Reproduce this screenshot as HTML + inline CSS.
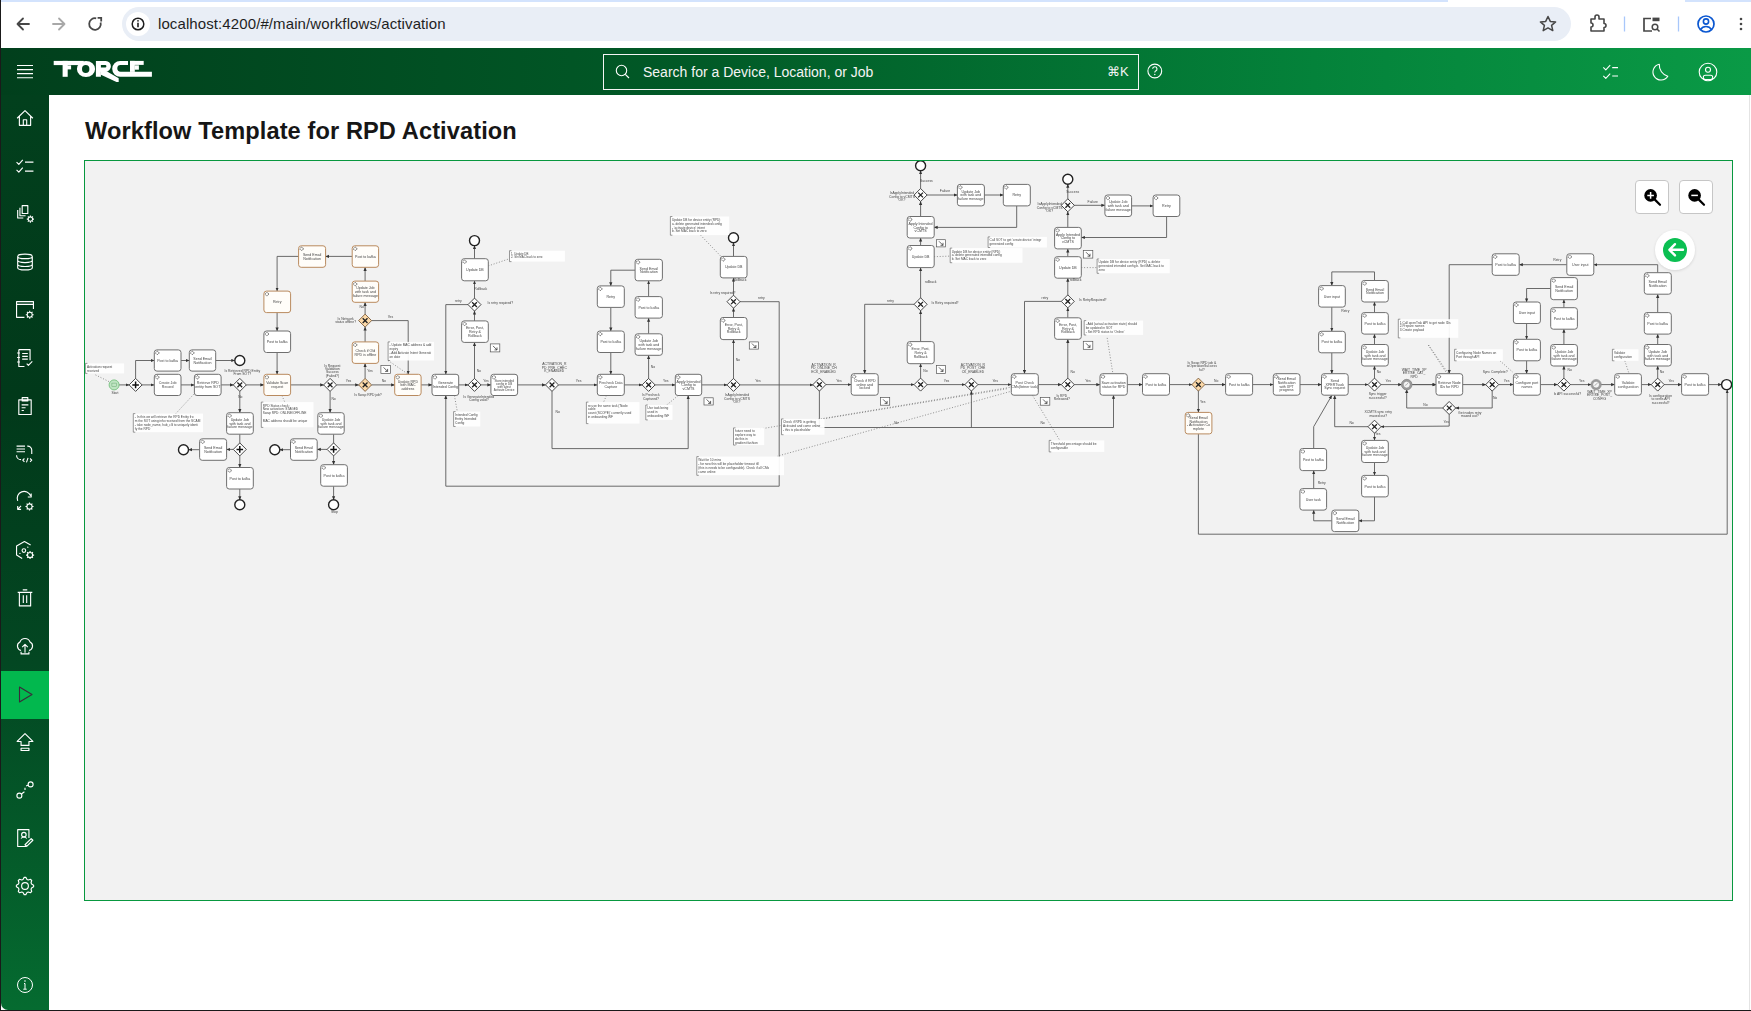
<!DOCTYPE html>
<html><head><meta charset="utf-8">
<style>
*{box-sizing:border-box;margin:0;padding:0}
html,body{width:1751px;height:1011px;overflow:hidden;background:#fff;font-family:"Liberation Sans",sans-serif}
#chrome{position:absolute;left:0;top:0;width:1751px;height:48px;background:#fff}
#tabstrip{position:absolute;left:0;top:0;width:1448px;height:1.5px;background:#d3e3fd}
#tabstrip2{position:absolute;left:1685px;top:0;width:66px;height:1.5px;background:#d3e3fd}
#url{position:absolute;left:122px;top:7px;width:1449px;height:34px;border-radius:17px;background:#e9eef6}
#urltext{position:absolute;left:158px;top:15px;font-size:15px;color:#1f1f1f;letter-spacing:0.1px}
#header{position:absolute;left:1px;top:48px;width:1750px;height:47px;background:linear-gradient(90deg,#013f1c 0%,#015a27 40%,#04823a 75%,#0a9a46 100%)}
#sidebar{position:absolute;left:1px;top:95px;width:48px;height:915px;background:linear-gradient(180deg,#02401d 0%,#01391a 33%,#034722 62%,#056b30 100%);border-bottom-left-radius:7px}
#leftedge{position:absolute;left:0;top:0;width:1px;height:1011px;background:#1a1a1a}
#bottomedge{position:absolute;left:0;top:1010px;width:1751px;height:1px;background:#1a1a1a}
#rightedge{position:absolute;left:1749px;top:95px;width:1px;height:915px;background:#e4e4e4}
#active{position:absolute;left:1px;top:671px;width:48px;height:48px;background:#02b84e}
#title{position:absolute;left:85px;top:118px;font-size:23.6px;font-weight:bold;color:#161616;letter-spacing:0.1px}
#diagram{position:absolute;left:84px;top:160px;width:1649px;height:741px;border:1px solid #08983f;background:#f2f2f2;overflow:hidden}
.icon{position:absolute}
#search{position:absolute;left:603px;top:54px;width:536px;height:36px;border:1px solid #f4f4f4}
#searchtext{position:absolute;left:643px;top:64px;font-size:14px;color:#f4f4f4}
#cmdk{position:absolute;left:1107px;top:64px;font-size:13px;color:#f4f4f4}
.zb{position:absolute;top:180px;width:34px;height:34px;border:1px solid #c6c6c6;border-radius:4px;background:#fff}
</style></head><body>
<div id="chrome"></div>
<div id="tabstrip"></div><div id="tabstrip2"></div>
<div id="url"></div>
<div style="position:absolute;left:126px;top:12px;width:24px;height:24px;border-radius:12px;background:#fff"></div>
<div id="urltext">localhost:4200/#/main/workflows/activation</div>
<!-- chrome icons -->
<svg class="icon" style="left:0;top:0" width="1751" height="48">
 <g fill="none" stroke="#474747" stroke-width="1.8" stroke-linecap="round" stroke-linejoin="round">
  <path d="M17.5 24H29M17.5 24L23 18.5M17.5 24L23 29.5"/>
 </g>
 <g fill="none" stroke="#a8a8a8" stroke-width="1.8" stroke-linecap="round" stroke-linejoin="round">
  <path d="M53 24H64.5M64.5 24L59 18.5M64.5 24L59 29.5"/>
 </g>
 <g fill="none" stroke="#474747" stroke-width="1.8">
  <path d="M100.60 22.50A5.8 5.8 0 1 1 96.21 18.33"/>
  <path d="M97.6 17.9H101.2V21.4" stroke-linejoin="miter"/>
 </g>
 <circle cx="138" cy="24" r="5.8" fill="none" stroke="#1f1f1f" stroke-width="1.5"/>
 <path d="M138 22.8V27.2" stroke="#1f1f1f" stroke-width="1.6"/>
 <circle cx="138" cy="20.8" r="0.9" fill="#1f1f1f"/>
 <path d="M1548 16.5L1550.3 21.4L1555.6 21.9L1551.6 25.4L1552.8 30.6L1548 27.9L1543.2 30.6L1544.4 25.4L1540.4 21.9L1545.7 21.4Z" fill="none" stroke="#474747" stroke-width="1.5" stroke-linejoin="round"/>
 <path d="M1591 19H1595V17A2 2 0 0 1 1599 17V19H1604V23.5A2 2 0 0 1 1604 27.5V31H1591V27A2 2 0 0 0 1591 23Z" fill="none" stroke="#474747" stroke-width="1.6" stroke-linejoin="round"/>
 <path d="M1624.5 16.5V31.5" stroke="#a8c7fa" stroke-width="1.3"/>
 <path d="M1652 31H1644V18.5H1651" fill="none" stroke="#474747" stroke-width="1.7"/>
 <rect x="1652.5" y="17.6" width="7" height="3.6" fill="#474747"/>
 <circle cx="1655" cy="27" r="2.8" fill="none" stroke="#474747" stroke-width="1.5"/>
 <path d="M1657 29L1659.5 31.5" stroke="#474747" stroke-width="1.6"/>
 <path d="M1678.5 16.5V31.5" stroke="#a8c7fa" stroke-width="1.3"/>
 <circle cx="1706" cy="24" r="8" fill="none" stroke="#0b57d0" stroke-width="1.7"/>
 <circle cx="1706" cy="21.5" r="2.6" fill="none" stroke="#0b57d0" stroke-width="1.6"/>
 <path d="M1700.5 29.5A6.5 6.5 0 0 1 1711.5 29.5" fill="none" stroke="#0b57d0" stroke-width="1.6"/>
 <circle cx="1741" cy="19" r="1.3" fill="#474747"/><circle cx="1741" cy="24" r="1.3" fill="#474747"/><circle cx="1741" cy="29" r="1.3" fill="#474747"/>
</svg>
<div id="header"></div>
<div id="search"></div>
<div id="searchtext">Search for a Device, Location, or Job</div>
<div id="cmdk">⌘K</div>
<svg class="icon" style="left:0;top:48px" width="1751" height="47">
 <g stroke="#fff" stroke-width="1.1">
  <path d="M17 17.5H33M17 21.6H33M17 25.6H33M17 29.7H33"/>
 </g>
 <g fill="#fff">
  <rect x="53.7" y="12.9" width="30" height="4.2"/>
  <rect x="62.6" y="12.9" width="5.1" height="15.9"/>
  <rect x="67" y="17.4" width="4.1" height="4"/>
  <path fill-rule="evenodd" d="M86 12.9A9.1 8.1 0 1 1 86 29.1A9.1 8.1 0 1 1 86 12.9ZM85.7 16.9A3.7 4 0 1 0 85.7 24.9A3.7 4 0 1 0 85.7 16.9Z"/>
  <path fill-rule="evenodd" d="M95.9 12.9H105.8A5.1 5.4 0 0 1 105.8 23.7H100.9V28.7H95.9ZM100.9 17.1H105.2A1.2 1.2 0 0 1 105.2 19.5H100.9Z"/>
  <path d="M100.9 23H106.3L118.7 30.2V34H116.5L100.9 26.8Z"/>
  <path d="M128 12.9H120.1A7.9 7.9 0 0 0 120.1 28.7H151.9V23.7H120.6A3.3 3.4 0 0 1 120.6 16.9H128Z"/>
  <rect x="130" y="12.9" width="13.7" height="4"/>
  <rect x="130" y="12.9" width="4.8" height="11"/>
  <rect x="134.5" y="17.3" width="4.4" height="4.4"/>
 </g>
 <g fill="none" stroke="#fff" stroke-width="1.1">
  <circle cx="621.5" cy="22.5" r="5.2"/>
  <path d="M625.3 26.3L629 30"/>
  <circle cx="1154.8" cy="23" r="6.9"/>
  <path d="M1152.6 20.8A2.2 2.2 0 1 1 1155.4 23.1C1154.9 23.4 1154.8 23.8 1154.8 24.6"/>
 </g>
 <circle cx="1154.8" cy="26.5" r="0.7" fill="#fff"/>
 <g fill="none" stroke="#fff" stroke-width="1.1" stroke-linejoin="round">
  <path d="M1603.3 19.3L1605.8 21.8L1610.2 17.2M1612.2 19.6H1618M1603.3 27.8L1605.8 30.3L1610.2 25.7M1612.2 28H1618"/>
  <path d="M1659.3 16.2A8 8 0 1 0 1667.8 28.2A11.6 11.6 0 0 1 1659.3 16.2Z"/>
  <circle cx="1708" cy="24" r="8.8"/>
  <circle cx="1708" cy="21.8" r="2.5"/>
  <rect x="1703.3" y="27.2" width="9.4" height="4.3" rx="2"/>
 </g>
</svg>

<div id="sidebar"></div>
<div id="active"></div>
<svg style="position:absolute;left:0;top:0" width="50" height="1011"><g transform="translate(16 109) scale(1.125)"><path stroke="#fff" stroke-width="1" fill="none" stroke-linejoin="round" d="M1 8.2L8 1.5L15 8.2M3 6.5V14.5H13V6.5M6.5 14.5V9.5H9.5V14.5"/></g><g transform="translate(16 157) scale(1.125)"><path stroke="#fff" stroke-width="1" fill="none" stroke-linejoin="round" d="M0.5 4.5L2.5 6.5L6 2.5M8 4.5H15.5M0.5 11.5L2.5 13.5L6 9.5M8 12.5H15.5"/></g><g transform="translate(16 205) scale(1.125)"><path stroke="#fff" stroke-width="1" fill="none" stroke-linejoin="round" d="M5.5 0.5H10.5V7.5H5.5ZM3.5 2.5V9.5H8.5M1.5 4.5V11.5H6.5"/><path stroke="#fff" stroke-width="1" fill="none" stroke-linejoin="round" d="M10.85 12.50 A1.95 1.95 0 1 0 14.75 12.50 A1.95 1.95 0 1 0 10.85 12.50 M14.75 12.50 L16.00 12.50 M14.18 13.88 L15.06 14.76 M12.80 14.45 L12.80 15.70 M11.42 13.88 L10.54 14.76 M10.85 12.50 L9.60 12.50 M11.42 11.12 L10.54 10.24 M12.80 10.55 L12.80 9.30 M14.18 11.12 L15.06 10.24"/></g><g transform="translate(16 253) scale(1.125)"><path stroke="#fff" stroke-width="1" fill="none" stroke-linejoin="round" d="M1.5 3A6.5 2 0 0 0 14.5 3A6.5 2 0 0 0 1.5 3M1.5 3V13A6.5 2 0 0 0 14.5 13V3M1.5 6.5A6.5 2 0 0 0 14.5 6.5M1.5 10A6.5 2 0 0 0 14.5 10"/></g><g transform="translate(16 301) scale(1.125)"><path stroke="#fff" stroke-width="1" fill="none" stroke-linejoin="round" d="M7.5 14.5H0.5V0.5H15.5V7M0.5 3H15.5"/><path stroke="#fff" stroke-width="1" fill="none" stroke-linejoin="round" d="M10.00 12.20 A2.20 2.20 0 1 0 14.40 12.20 A2.20 2.20 0 1 0 10.00 12.20 M14.40 12.20 L15.70 12.20 M13.76 13.76 L14.67 14.67 M12.20 14.40 L12.20 15.70 M10.64 13.76 L9.73 14.67 M10.00 12.20 L8.70 12.20 M10.64 10.64 L9.73 9.73 M12.20 10.00 L12.20 8.70 M13.76 10.64 L14.67 9.73"/></g><g transform="translate(16 349) scale(1.125)"><path stroke="#fff" stroke-width="1" fill="none" stroke-linejoin="round" d="M2.5 0.5H12.5V10M2.5 0.5V15.5H7.5M1 3.5H3.5M1 7.5H3.5M1 11.5H3.5M5.5 4H10.5M5.5 6.5H10.5M5.5 9H10.5M9.5 13L11 14.5L14.5 11"/></g><g transform="translate(16 397) scale(1.125)"><path stroke="#fff" stroke-width="1" fill="none" stroke-linejoin="round" d="M2.5 2.5H13.5V15.5H2.5ZM5.5 0.5H10.5V3.5H5.5ZM5 7H11M5 9.5H8.5M5 12H7"/></g><g transform="translate(16 445) scale(1.125)"><path stroke="#fff" stroke-width="1" fill="none" stroke-linejoin="round" d="M0.5 1H8M0.5 3.5H8M0.5 6H8M10 1A3.5 3.5 0 0 1 14 4.5V8M0.5 9A4 4 0 0 0 4.5 13M7.5 12L6 13.5L7.5 15M12.5 12L14 13.5L12.5 15M10.7 11.5L9.3 15.5"/></g><g transform="translate(16 493) scale(1.125)"><path stroke="#fff" stroke-width="1" fill="none" stroke-linejoin="round" d="M1.5 7A6 6 0 0 1 13 2.5M13.5 0.5V3.5H10.5M1.5 11.5V14.5H4.5M1.5 14.5L4.5 11.5"/><path stroke="#fff" stroke-width="1" fill="none" stroke-linejoin="round" d="M9.70 12.00 A2.30 2.30 0 1 0 14.30 12.00 A2.30 2.30 0 1 0 9.70 12.00 M14.30 12.00 L15.60 12.00 M13.63 13.63 L14.55 14.55 M12.00 14.30 L12.00 15.60 M10.37 13.63 L9.45 14.55 M9.70 12.00 L8.40 12.00 M10.37 10.37 L9.45 9.45 M12.00 9.70 L12.00 8.40 M13.63 10.37 L14.55 9.45"/></g><g transform="translate(16 541) scale(1.125)"><path stroke="#fff" stroke-width="1" fill="none" stroke-linejoin="round" d="M5.5 15.5L0.5 12.5V4.5L7.5 0.5L13 3.5"/><circle cx="7" cy="8.5" r="1.6" stroke="#fff" stroke-width="1" fill="none" stroke-linejoin="round"/><circle cx="3.5" cy="11" r="0.6" fill="#fff"/><circle cx="10.5" cy="5.5" r="0.6" fill="#fff"/><path stroke="#fff" stroke-width="1" fill="none" stroke-linejoin="round" d="M10.20 12.50 A2.30 2.30 0 1 0 14.80 12.50 A2.30 2.30 0 1 0 10.20 12.50 M14.80 12.50 L16.10 12.50 M14.13 14.13 L15.05 15.05 M12.50 14.80 L12.50 16.10 M10.87 14.13 L9.95 15.05 M10.20 12.50 L8.90 12.50 M10.87 10.87 L9.95 9.95 M12.50 10.20 L12.50 8.90 M14.13 10.87 L15.05 9.95"/></g><g transform="translate(16 589) scale(1.125)"><path stroke="#fff" stroke-width="1" fill="none" stroke-linejoin="round" d="M1.5 3H14.5M6 0.8H10M3 3V15H13V3M6.5 5.5V12.5M9.5 5.5V12.5"/></g><g transform="translate(16 637) scale(1.125)"><path stroke="#fff" stroke-width="1" fill="none" stroke-linejoin="round" d="M4.5 12A4 4 0 0 1 3.5 4.5A4.8 4.8 0 0 1 12.5 4.5A4 4 0 0 1 11.5 12M8 14V6.5M5.5 9L8 6.5L10.5 9M4.5 13V15H11.5V13"/></g><g transform="translate(16 733) scale(1.125)"><path stroke="#fff" stroke-width="1" fill="none" stroke-linejoin="round" d="M8 0.5L1 7.5H4.5V11H11.5V7.5H15ZM4.5 13.5H11.5V15.5H4.5Z"/></g><g transform="translate(16 781) scale(1.125)"><circle cx="3" cy="13" r="2.2" stroke="#fff" stroke-width="1" fill="none" stroke-linejoin="round"/><circle cx="13" cy="3" r="2.2" stroke="#fff" stroke-width="1" fill="none" stroke-linejoin="round"/><path stroke="#fff" stroke-width="1" fill="none" stroke-linejoin="round" d="M4.8 11.5L7.5 9.5M8 8V6M9 4.5L11 3.5"/></g><g transform="translate(16 829) scale(1.125)"><path stroke="#fff" stroke-width="1" fill="none" stroke-linejoin="round" d="M9 15.5H1.5V0.5H11.5V8M4.5 8.5A3 3 0 0 1 9.5 8.5"/><circle cx="7" cy="5" r="2" stroke="#fff" stroke-width="1" fill="none" stroke-linejoin="round"/><path stroke="#fff" stroke-width="1" fill="none" stroke-linejoin="round" d="M9.5 15.5L15 10L13.5 8.5L8 14Z"/></g><g transform="translate(16 877) scale(1.125)"><path stroke="#fff" stroke-width="1" fill="none" stroke-linejoin="round" d="M15.66 7.25L15.66 8.75L13.84 9.77L13.38 10.88L13.95 12.88L12.88 13.95L10.88 13.38L9.77 13.84L8.75 15.66L7.25 15.66L6.23 13.84L5.12 13.38L3.12 13.95L2.05 12.88L2.62 10.88L2.16 9.77L0.34 8.75L0.34 7.25L2.16 6.23L2.62 5.12L2.05 3.12L3.12 2.05L5.12 2.62L6.23 2.16L7.25 0.34L8.75 0.34L9.77 2.16L10.88 2.62L12.88 2.05L13.95 3.12L13.38 5.12L13.84 6.23Z"/><circle cx="8" cy="8" r="3" stroke="#fff" stroke-width="1" fill="none" stroke-linejoin="round"/></g><path d="M19.5 687L32 694.5L19.5 702Z" fill="none" stroke="#3b2b3b" stroke-width="1.1" stroke-linejoin="round"/><circle cx="25" cy="985" r="7.5" fill="none" stroke="#fff" stroke-width="1"/><path d="M25 983.5V989M23.3 989.2H26.7M24 983.5H25" stroke="#fff" stroke-width="1" fill="none"/><circle cx="25" cy="981" r="0.8" fill="#fff"/></svg>
<div id="leftedge"></div>
<div id="bottomedge"></div><div id="rightedge"></div>
<div id="title">Workflow Template for RPD Activation</div>
<div id="diagram"></div>
<svg id="dsvg" width="1751" height="1011" style="position:absolute;left:0;top:0;will-change:transform" font-family="Liberation Sans, sans-serif"><defs><marker id="ah" markerWidth="4" markerHeight="4" refX="3.6" refY="2" orient="auto" markerUnits="userSpaceOnUse"><path d="M0 0.4L3.8 2L0 3.6Z" fill="#333"/></marker><clipPath id="dclip"><rect x="85" y="161" width="1647" height="739"/></clipPath></defs><g clip-path="url(#dclip)"><path d="M95.5 374.9L109.8 382" fill="none" stroke="#666" stroke-width="0.7" stroke-dasharray="1 1.8"/>
<path d="M119 384.9L129.3 384.9" fill="none" stroke="#5a5a5a" stroke-width="0.9" marker-end="url(#ah)"/>
<path d="M141.9 384.9L154.3 384.9" fill="none" stroke="#5a5a5a" stroke-width="0.9" marker-end="url(#ah)"/>
<path d="M135.6 378.6L135.6 360.5L154.3 360.5" fill="none" stroke="#5a5a5a" stroke-width="0.9" marker-end="url(#ah)"/>
<path d="M181 360.5L189.3 360.5" fill="none" stroke="#5a5a5a" stroke-width="0.9" marker-end="url(#ah)"/>
<path d="M215.7 360.5L234.9 360.5" fill="none" stroke="#5a5a5a" stroke-width="0.9" marker-end="url(#ah)"/>
<path d="M181 384.9L194.4 384.9" fill="none" stroke="#5a5a5a" stroke-width="0.9" marker-end="url(#ah)"/>
<path d="M221.1 384.9L233.5 384.9" fill="none" stroke="#5a5a5a" stroke-width="0.9" marker-end="url(#ah)"/>
<path d="M246.1 384.9L263.9 384.9" fill="none" stroke="#5a5a5a" stroke-width="0.9" marker-end="url(#ah)"/>
<path d="M239.8 391.2L239.8 412.7" fill="none" stroke="#5a5a5a" stroke-width="0.9" marker-end="url(#ah)"/>
<path d="M239.8 434.2L239.8 443.1" fill="none" stroke="#5a5a5a" stroke-width="0.9"/>
<path d="M233.5 449.4L226.6 449.4" fill="none" stroke="#5a5a5a" stroke-width="0.9" marker-end="url(#ah)"/>
<path d="M199.6 449.7L188.4 449.7" fill="none" stroke="#5a5a5a" stroke-width="0.9" marker-end="url(#ah)"/>
<path d="M239.8 455.8L239.8 467.5" fill="none" stroke="#5a5a5a" stroke-width="0.9" marker-end="url(#ah)"/>
<path d="M239.8 489L239.8 499.9" fill="none" stroke="#5a5a5a" stroke-width="0.9" marker-end="url(#ah)"/>
<path d="M175.8 413.6L194.4 393.5" fill="none" stroke="#666" stroke-width="0.7" stroke-dasharray="1 1.8"/>
<path d="M281.9 395.5L284.8 402.1" fill="none" stroke="#666" stroke-width="0.7" stroke-dasharray="1 1.8"/>
<path d="M277.1 352.5L277.1 374.3" fill="none" stroke="#5a5a5a" stroke-width="0.9" marker-end="url(#ah)"/>
<path d="M277.1 312.6L277.1 331" fill="none" stroke="#5a5a5a" stroke-width="0.9" marker-end="url(#ah)"/>
<path d="M298.6 256.4L277.1 256.4L277.1 291.1" fill="none" stroke="#5a5a5a" stroke-width="0.9" marker-end="url(#ah)"/>
<path d="M352.2 256.4L325.5 256.4" fill="none" stroke="#5a5a5a" stroke-width="0.9" marker-end="url(#ah)"/>
<path d="M365.1 281.1L365.1 267.3" fill="none" stroke="#5a5a5a" stroke-width="0.9" marker-end="url(#ah)"/>
<path d="M365.1 314.3L365.1 302.3" fill="none" stroke="#5a5a5a" stroke-width="0.9" marker-end="url(#ah)"/>
<path d="M365.1 341.9L365.1 327" fill="none" stroke="#5a5a5a" stroke-width="0.9" marker-end="url(#ah)"/>
<path d="M365.1 378.6L365.1 363.4" fill="none" stroke="#5a5a5a" stroke-width="0.9" marker-end="url(#ah)"/>
<path d="M290.5 384.9L323.8 384.9" fill="none" stroke="#5a5a5a" stroke-width="0.9" marker-end="url(#ah)"/>
<path d="M336.4 384.9L358.8 384.9" fill="none" stroke="#5a5a5a" stroke-width="0.9" marker-end="url(#ah)"/>
<path d="M371.4 384.9L394.7 384.9" fill="none" stroke="#5a5a5a" stroke-width="0.9" marker-end="url(#ah)"/>
<path d="M371.4 320.6L408.2 320.6L408.2 374.3" fill="none" stroke="#5a5a5a" stroke-width="0.9" marker-end="url(#ah)"/>
<path d="M421.1 384.9L432 384.9" fill="none" stroke="#5a5a5a" stroke-width="0.9" marker-end="url(#ah)"/>
<path d="M388.1 360.5L408.2 374.3" fill="none" stroke="#666" stroke-width="0.7" stroke-dasharray="1 1.8"/>
<path d="M330.1 391.2L330.1 412.7" fill="none" stroke="#5a5a5a" stroke-width="0.9" marker-end="url(#ah)"/>
<path d="M333.6 434.2L333.6 443.1" fill="none" stroke="#5a5a5a" stroke-width="0.9"/>
<path d="M327.3 449.4L317.2 449.4" fill="none" stroke="#5a5a5a" stroke-width="0.9" marker-end="url(#ah)"/>
<path d="M290.5 449.7L279.6 449.7" fill="none" stroke="#5a5a5a" stroke-width="0.9" marker-end="url(#ah)"/>
<path d="M333.6 455.8L333.6 464.7" fill="none" stroke="#5a5a5a" stroke-width="0.9" marker-end="url(#ah)"/>
<path d="M333.6 486.2L333.6 499.9" fill="none" stroke="#5a5a5a" stroke-width="0.9" marker-end="url(#ah)"/>
<path d="M458.7 384.9L468.2 384.9" fill="none" stroke="#5a5a5a" stroke-width="0.9" marker-end="url(#ah)"/>
<path d="M480.8 384.9L490.9 384.9" fill="none" stroke="#5a5a5a" stroke-width="0.9" marker-end="url(#ah)"/>
<path d="M517.5 384.9L545.6 384.9" fill="none" stroke="#5a5a5a" stroke-width="0.9" marker-end="url(#ah)"/>
<path d="M558.3 384.9L597.3 384.9" fill="none" stroke="#5a5a5a" stroke-width="0.9" marker-end="url(#ah)"/>
<path d="M624.2 384.9L642.3 384.9" fill="none" stroke="#5a5a5a" stroke-width="0.9" marker-end="url(#ah)"/>
<path d="M654.9 384.9L675.3 384.9" fill="none" stroke="#5a5a5a" stroke-width="0.9" marker-end="url(#ah)"/>
<path d="M701.7 384.9L727.2 384.9" fill="none" stroke="#5a5a5a" stroke-width="0.9" marker-end="url(#ah)"/>
<path d="M739.9 384.9L813.1 384.9" fill="none" stroke="#5a5a5a" stroke-width="0.9" marker-end="url(#ah)"/>
<path d="M474.5 378.6L474.5 342.4" fill="none" stroke="#5a5a5a" stroke-width="0.9" marker-end="url(#ah)"/>
<path d="M474.5 320.9L474.5 310.9" fill="none" stroke="#5a5a5a" stroke-width="0.9" marker-end="url(#ah)"/>
<path d="M474.5 298.3L474.5 280.8" fill="none" stroke="#5a5a5a" stroke-width="0.9" marker-end="url(#ah)"/>
<path d="M474.5 258.7L474.5 245.5" fill="none" stroke="#5a5a5a" stroke-width="0.9" marker-end="url(#ah)"/>
<path d="M468.2 304.6L445.8 304.6L445.8 374.3" fill="none" stroke="#5a5a5a" stroke-width="0.9" marker-end="url(#ah)"/>
<path d="M488.3 265.9L509.5 258.7" fill="none" stroke="#666" stroke-width="0.7" stroke-dasharray="1 1.8"/>
<path d="M454.4 395.5L457.3 411.6" fill="none" stroke="#666" stroke-width="0.7" stroke-dasharray="1 1.8"/>
<path d="M552 391.2L552 448.6L688.2 448.6L688.2 395.5" fill="none" stroke="#5a5a5a" stroke-width="0.9" marker-end="url(#ah)"/>
<path d="M610.8 352.5L610.8 374.3" fill="none" stroke="#5a5a5a" stroke-width="0.9" marker-end="url(#ah)"/>
<path d="M610.8 307.5L610.8 331" fill="none" stroke="#5a5a5a" stroke-width="0.9" marker-end="url(#ah)"/>
<path d="M635.1 270.2L610.8 270.2L610.8 285.9" fill="none" stroke="#5a5a5a" stroke-width="0.9" marker-end="url(#ah)"/>
<path d="M648.6 378.6L648.6 355.4" fill="none" stroke="#5a5a5a" stroke-width="0.9" marker-end="url(#ah)"/>
<path d="M648.6 333.8L648.6 318.1" fill="none" stroke="#5a5a5a" stroke-width="0.9" marker-end="url(#ah)"/>
<path d="M648.6 296.6L648.6 280.8" fill="none" stroke="#5a5a5a" stroke-width="0.9" marker-end="url(#ah)"/>
<path d="M606.5 395.5L603.6 402.1" fill="none" stroke="#666" stroke-width="0.7" stroke-dasharray="1 1.8"/>
<path d="M678.2 395.5L666.7 405" fill="none" stroke="#666" stroke-width="0.7" stroke-dasharray="1 1.8"/>
<path d="M733.5 378.6L733.5 339.6" fill="none" stroke="#5a5a5a" stroke-width="0.9" marker-end="url(#ah)"/>
<path d="M733.5 317.5L733.5 308" fill="none" stroke="#5a5a5a" stroke-width="0.9" marker-end="url(#ah)"/>
<path d="M733.5 295.4L733.5 277.9" fill="none" stroke="#5a5a5a" stroke-width="0.9" marker-end="url(#ah)"/>
<path d="M733.5 256.4L733.5 242.6" fill="none" stroke="#5a5a5a" stroke-width="0.9" marker-end="url(#ah)"/>
<path d="M739.9 301.7L779.2 301.7L779.2 486.2L445.8 486.2L445.8 395.5" fill="none" stroke="#5a5a5a" stroke-width="0.9" marker-end="url(#ah)"/>
<path d="M700.6 235.2L723.5 259" fill="none" stroke="#666" stroke-width="0.7" stroke-dasharray="1 1.8"/>
<path d="M825.7 384.6L851.2 384.6" fill="none" stroke="#5a5a5a" stroke-width="0.9" marker-end="url(#ah)"/>
<path d="M878.2 384.6L914.3 384.6" fill="none" stroke="#5a5a5a" stroke-width="0.9" marker-end="url(#ah)"/>
<path d="M927 384.6L965.1 384.6" fill="none" stroke="#5a5a5a" stroke-width="0.9" marker-end="url(#ah)"/>
<path d="M977.7 384.6L1011.3 384.6" fill="none" stroke="#5a5a5a" stroke-width="0.9" marker-end="url(#ah)"/>
<path d="M1038.3 384.6L1061.5 384.6" fill="none" stroke="#5a5a5a" stroke-width="0.9" marker-end="url(#ah)"/>
<path d="M1074.1 384.6L1099.9 384.6" fill="none" stroke="#5a5a5a" stroke-width="0.9" marker-end="url(#ah)"/>
<path d="M920.6 378.3L920.6 363.7" fill="none" stroke="#5a5a5a" stroke-width="0.9" marker-end="url(#ah)"/>
<path d="M920.6 341.6L920.6 310.6" fill="none" stroke="#5a5a5a" stroke-width="0.9" marker-end="url(#ah)"/>
<path d="M914.3 304.3L864.7 304.3L864.7 373.7" fill="none" stroke="#5a5a5a" stroke-width="0.9" marker-end="url(#ah)"/>
<path d="M920.6 298L920.6 267.6" fill="none" stroke="#5a5a5a" stroke-width="0.9" marker-end="url(#ah)"/>
<path d="M920.6 245.5L920.6 238" fill="none" stroke="#5a5a5a" stroke-width="0.9" marker-end="url(#ah)"/>
<path d="M920.6 216.5L920.6 201.3" fill="none" stroke="#5a5a5a" stroke-width="0.9" marker-end="url(#ah)"/>
<path d="M920.6 188.7L920.6 170.6" fill="none" stroke="#5a5a5a" stroke-width="0.9" marker-end="url(#ah)"/>
<path d="M927 195L957.4 195" fill="none" stroke="#5a5a5a" stroke-width="0.9" marker-end="url(#ah)"/>
<path d="M984.3 195L1003.3 195" fill="none" stroke="#5a5a5a" stroke-width="0.9" marker-end="url(#ah)"/>
<path d="M1016.7 205.9L1016.7 227.4L934.1 227.4" fill="none" stroke="#5a5a5a" stroke-width="0.9" marker-end="url(#ah)"/>
<path d="M934.1 256.7L950.2 256.1" fill="none" stroke="#666" stroke-width="0.7" stroke-dasharray="1 1.8"/>
<path d="M819.4 390.9L819.4 427.5L1113.5 427.5L1113.5 395.2" fill="none" stroke="#5a5a5a" stroke-width="0.9" marker-end="url(#ah)"/>
<path d="M971.4 427.5L971.4 390.9" fill="none" stroke="#5a5a5a" stroke-width="0.9" marker-end="url(#ah)"/>
<path d="M1009.6 387.4L760 429" fill="none" stroke="#666" stroke-width="0.7" stroke-dasharray="1 1.8"/>
<path d="M1009.6 391.7L777.2 456.2" fill="none" stroke="#666" stroke-width="0.7" stroke-dasharray="1 1.8"/>
<path d="M1006.7 388.8L823.1 418.9" fill="none" stroke="#666" stroke-width="0.7" stroke-dasharray="1 1.8"/>
<path d="M1032.5 395.4L1059.8 440.4" fill="none" stroke="#666" stroke-width="0.7" stroke-dasharray="1 1.8"/>
<path d="M1067.8 378.3L1067.8 339.3" fill="none" stroke="#5a5a5a" stroke-width="0.9" marker-end="url(#ah)"/>
<path d="M1067.8 317.8L1067.8 307.7" fill="none" stroke="#5a5a5a" stroke-width="0.9" marker-end="url(#ah)"/>
<path d="M1061.5 301.4L1024.5 301.4L1024.5 373.7" fill="none" stroke="#5a5a5a" stroke-width="0.9" marker-end="url(#ah)"/>
<path d="M1067.8 295.1L1067.8 278.2" fill="none" stroke="#5a5a5a" stroke-width="0.9" marker-end="url(#ah)"/>
<path d="M1067.8 256.7L1067.8 248.9" fill="none" stroke="#5a5a5a" stroke-width="0.9" marker-end="url(#ah)"/>
<path d="M1067.8 227.4L1067.8 211.6" fill="none" stroke="#5a5a5a" stroke-width="0.9" marker-end="url(#ah)"/>
<path d="M1067.8 199L1067.8 184.1" fill="none" stroke="#5a5a5a" stroke-width="0.9" marker-end="url(#ah)"/>
<path d="M1074.1 205.3L1104.9 205.3" fill="none" stroke="#5a5a5a" stroke-width="0.9" marker-end="url(#ah)"/>
<path d="M1081.3 267.6L1097.1 267.6" fill="none" stroke="#666" stroke-width="0.7" stroke-dasharray="1 1.8"/>
<path d="M1107.2 337.9L1112.9 373.7" fill="none" stroke="#666" stroke-width="0.7" stroke-dasharray="1 1.8"/>
<path d="M1131.6 205.9L1153.1 205.9" fill="none" stroke="#5a5a5a" stroke-width="0.9" marker-end="url(#ah)"/>
<path d="M1166.6 216.5L1166.6 237.5L1081.3 237.5" fill="none" stroke="#5a5a5a" stroke-width="0.9" marker-end="url(#ah)"/>
<path d="M1127.3 384.6L1142.5 384.6" fill="none" stroke="#5a5a5a" stroke-width="0.9" marker-end="url(#ah)"/>
<path d="M1169.4 384.6L1192.1 384.6" fill="none" stroke="#5a5a5a" stroke-width="0.9" marker-end="url(#ah)"/>
<path d="M1204.7 384.6L1225.6 384.6" fill="none" stroke="#5a5a5a" stroke-width="0.9" marker-end="url(#ah)"/>
<path d="M1252.6 384.6L1273.3 384.6" fill="none" stroke="#5a5a5a" stroke-width="0.9" marker-end="url(#ah)"/>
<path d="M1299.9 384.6L1321.5 384.6" fill="none" stroke="#5a5a5a" stroke-width="0.9" marker-end="url(#ah)"/>
<path d="M1348.1 384.6L1368.2 384.6" fill="none" stroke="#5a5a5a" stroke-width="0.9" marker-end="url(#ah)"/>
<path d="M1380.8 384.6L1401.8 384.6" fill="none" stroke="#5a5a5a" stroke-width="0.9" marker-end="url(#ah)"/>
<path d="M1411.5 384.6L1436.2 384.6" fill="none" stroke="#5a5a5a" stroke-width="0.9" marker-end="url(#ah)"/>
<path d="M1374.5 378.3L1374.5 366" fill="none" stroke="#5a5a5a" stroke-width="0.9" marker-end="url(#ah)"/>
<path d="M1374.5 344.5L1374.5 334.1" fill="none" stroke="#5a5a5a" stroke-width="0.9" marker-end="url(#ah)"/>
<path d="M1374.5 312.6L1374.5 302" fill="none" stroke="#5a5a5a" stroke-width="0.9" marker-end="url(#ah)"/>
<path d="M1374.5 280.5L1374.5 271.9L1331.8 271.9L1331.8 285.6" fill="none" stroke="#5a5a5a" stroke-width="0.9" marker-end="url(#ah)"/>
<path d="M1331.8 307.2L1331.8 331.3" fill="none" stroke="#5a5a5a" stroke-width="0.9" marker-end="url(#ah)"/>
<path d="M1331.8 352.8L1331.8 373.7" fill="none" stroke="#5a5a5a" stroke-width="0.9" marker-end="url(#ah)"/>
<path d="M1198.4 390.9L1198.4 412.4" fill="none" stroke="#5a5a5a" stroke-width="0.9" marker-end="url(#ah)"/>
<path d="M1198.4 434.1L1198.4 534.2L1727.2 534.2L1727.2 389.8" fill="none" stroke="#5a5a5a" stroke-width="0.9" marker-end="url(#ah)"/>
<path d="M1428.5 345L1448.5 373.7" fill="none" stroke="#666" stroke-width="0.7" stroke-dasharray="1 1.8"/>
<path d="M1449.2 414.3L1449.2 426.1L1380.8 426.7" fill="none" stroke="#5a5a5a" stroke-width="0.9" marker-end="url(#ah)"/>
<path d="M1368.2 426.7L1334.7 426.7L1334.7 395.4" fill="none" stroke="#5a5a5a" stroke-width="0.9" marker-end="url(#ah)"/>
<path d="M1374.5 433L1374.5 440.4" fill="none" stroke="#5a5a5a" stroke-width="0.9" marker-end="url(#ah)"/>
<path d="M1374.5 462.5L1374.5 475.4" fill="none" stroke="#5a5a5a" stroke-width="0.9" marker-end="url(#ah)"/>
<path d="M1374.5 497L1374.5 520.8L1358.7 520.8" fill="none" stroke="#5a5a5a" stroke-width="0.9" marker-end="url(#ah)"/>
<path d="M1331.8 520.8L1313.7 520.8L1313.7 510.1" fill="none" stroke="#5a5a5a" stroke-width="0.9" marker-end="url(#ah)"/>
<path d="M1313.7 488.6L1313.7 470.6" fill="none" stroke="#5a5a5a" stroke-width="0.9" marker-end="url(#ah)"/>
<path d="M1313.7 448.5L1313.7 426.7L1331.8 395.4" fill="none" stroke="#5a5a5a" stroke-width="0.9" marker-end="url(#ah)"/>
<path d="M1411.6 384.6L1436 384.6" fill="none" stroke="#5a5a5a" stroke-width="0.9" marker-end="url(#ah)"/>
<path d="M1462.7 384.6L1485.9 384.6" fill="none" stroke="#5a5a5a" stroke-width="0.9" marker-end="url(#ah)"/>
<path d="M1498.5 384.6L1513.4 384.6" fill="none" stroke="#5a5a5a" stroke-width="0.9" marker-end="url(#ah)"/>
<path d="M1540.4 384.6L1557.6 384.6" fill="none" stroke="#5a5a5a" stroke-width="0.9" marker-end="url(#ah)"/>
<path d="M1570.2 384.6L1591.2 384.6" fill="none" stroke="#5a5a5a" stroke-width="0.9" marker-end="url(#ah)"/>
<path d="M1600.9 384.6L1614.7 384.6" fill="none" stroke="#5a5a5a" stroke-width="0.9" marker-end="url(#ah)"/>
<path d="M1641.4 384.6L1651.4 384.6" fill="none" stroke="#5a5a5a" stroke-width="0.9" marker-end="url(#ah)"/>
<path d="M1664.1 384.6L1681.6 384.6" fill="none" stroke="#5a5a5a" stroke-width="0.9" marker-end="url(#ah)"/>
<path d="M1708.5 384.6L1721.7 384.6" fill="none" stroke="#5a5a5a" stroke-width="0.9" marker-end="url(#ah)"/>
<path d="M1492.2 390.8L1492.2 408L1455.5 408" fill="none" stroke="#5a5a5a" stroke-width="0.9" marker-end="url(#ah)"/>
<path d="M1442.9 408L1406.7 408L1406.7 389.4" fill="none" stroke="#5a5a5a" stroke-width="0.9" marker-end="url(#ah)"/>
<path d="M1492.2 264.7L1449.2 264.7L1449.2 373.7" fill="none" stroke="#5a5a5a" stroke-width="0.9" marker-end="url(#ah)"/>
<path d="M1566.8 264.7L1519.2 264.7" fill="none" stroke="#5a5a5a" stroke-width="0.9" marker-end="url(#ah)"/>
<path d="M1657.7 272.7L1657.7 264.7L1593.8 264.7" fill="none" stroke="#5a5a5a" stroke-width="0.9" marker-end="url(#ah)"/>
<path d="M1563.9 378.3L1563.9 366" fill="none" stroke="#5a5a5a" stroke-width="0.9" marker-end="url(#ah)"/>
<path d="M1563.9 344.5L1563.9 329.2" fill="none" stroke="#5a5a5a" stroke-width="0.9" marker-end="url(#ah)"/>
<path d="M1563.9 307.7L1563.9 299.7" fill="none" stroke="#5a5a5a" stroke-width="0.9" marker-end="url(#ah)"/>
<path d="M1550.7 288.5L1526.6 288.5L1526.6 302" fill="none" stroke="#5a5a5a" stroke-width="0.9" marker-end="url(#ah)"/>
<path d="M1526.6 323.5L1526.6 339.3" fill="none" stroke="#5a5a5a" stroke-width="0.9" marker-end="url(#ah)"/>
<path d="M1526.6 360.8L1526.6 373.7" fill="none" stroke="#5a5a5a" stroke-width="0.9" marker-end="url(#ah)"/>
<path d="M1657.7 378.3L1657.7 366" fill="none" stroke="#5a5a5a" stroke-width="0.9" marker-end="url(#ah)"/>
<path d="M1657.7 344.5L1657.7 334.1" fill="none" stroke="#5a5a5a" stroke-width="0.9" marker-end="url(#ah)"/>
<path d="M1657.7 312.6L1657.7 294.3" fill="none" stroke="#5a5a5a" stroke-width="0.9" marker-end="url(#ah)"/>
<path d="M1500 360.8L1512.9 372.3" fill="none" stroke="#666" stroke-width="0.7" stroke-dasharray="1 1.8"/>
<path d="M1624.8 360.8L1629.1 373.7" fill="none" stroke="#666" stroke-width="0.7" stroke-dasharray="1 1.8"/>
<path d="M1428.3 345L1446.9 373.7" fill="none" stroke="#666" stroke-width="0.7" stroke-dasharray="1 1.8"/>
<circle cx="114.1" cy="384.9" r="5" fill="#bfe4c2" stroke="#76bf7e" stroke-width="0.9"/>
<rect x="111.9" y="383.1" width="4.4" height="3.2" fill="none" stroke="#6aa872" stroke-width="0.5"/>
<path d="M135.6 378.4L142.1 384.9L135.6 391.4L129.1 384.9Z" fill="#ffffff" stroke="#333333" stroke-width="0.9"/>
<path d="M132.3 384.9H138.9M135.6 381.6V388.2" stroke="#111" stroke-width="1.5"/>
<rect x="154.3" y="374.3" width="26.7" height="21.2" rx="2.6" fill="#ffffff" stroke="#6f6f6f" stroke-width="1"/>
<circle cx="157.3" cy="377.3" r="1.6" fill="none" stroke="#333" stroke-width="0.8" stroke-dasharray="1 0.6"/>
<text x="167.6" y="384.4" font-size="3.6" fill="#444444" text-anchor="middle">Create Job</text>
<text x="167.6" y="388" font-size="3.6" fill="#444444" text-anchor="middle">Record</text>
<rect x="154.3" y="349.9" width="26.7" height="21.2" rx="2.6" fill="#ffffff" stroke="#6f6f6f" stroke-width="1"/>
<circle cx="157.3" cy="352.9" r="1.6" fill="none" stroke="#333" stroke-width="0.8" stroke-dasharray="1 0.6"/>
<text x="167.6" y="361.8" font-size="3.6" fill="#444444" text-anchor="middle">Post to kafka</text>
<rect x="189.3" y="349.9" width="26.4" height="21.2" rx="2.6" fill="#ffffff" stroke="#6f6f6f" stroke-width="1"/>
<circle cx="192.3" cy="352.9" r="1.6" fill="none" stroke="#333" stroke-width="0.8" stroke-dasharray="1 0.6"/>
<text x="202.5" y="360" font-size="3.6" fill="#444444" text-anchor="middle">Send Email</text>
<text x="202.5" y="363.6" font-size="3.6" fill="#444444" text-anchor="middle">Notification</text>
<circle cx="239.8" cy="360.5" r="5" fill="#fff" stroke="#222" stroke-width="1.4"/>
<rect x="194.4" y="374.3" width="26.7" height="21.2" rx="2.6" fill="#ffffff" stroke="#6f6f6f" stroke-width="1"/>
<circle cx="197.4" cy="377.3" r="1.6" fill="none" stroke="#333" stroke-width="0.8" stroke-dasharray="1 0.6"/>
<text x="207.8" y="384.4" font-size="3.6" fill="#444444" text-anchor="middle">Retrieve RPD</text>
<text x="207.8" y="388" font-size="3.6" fill="#444444" text-anchor="middle">entity from SOT</text>
<path d="M239.8 378.4L246.3 384.9L239.8 391.4L233.3 384.9Z" fill="#ffffff" stroke="#333333" stroke-width="0.9"/>
<path d="M237.4 382.5L242.2 387.3M242.2 382.5L237.4 387.3" stroke="#222" stroke-width="1.3"/>
<rect x="263.9" y="374.3" width="26.7" height="21.2" rx="2.6" fill="#fffdf9" stroke="#b98a5e" stroke-width="1"/>
<circle cx="266.9" cy="377.3" r="1.6" fill="none" stroke="#333" stroke-width="0.8" stroke-dasharray="1 0.6"/>
<text x="277.2" y="384.4" font-size="3.6" fill="#444444" text-anchor="middle">Validate Scan</text>
<text x="277.2" y="388" font-size="3.6" fill="#444444" text-anchor="middle">request</text>
<rect x="226.6" y="412.7" width="26.7" height="21.5" rx="2.6" fill="#ffffff" stroke="#6f6f6f" stroke-width="1"/>
<circle cx="229.6" cy="415.7" r="1.6" fill="none" stroke="#333" stroke-width="0.8" stroke-dasharray="1 0.6"/>
<text x="239.9" y="421.1" font-size="3.6" fill="#444444" text-anchor="middle">Update Job</text>
<text x="239.9" y="424.7" font-size="3.6" fill="#444444" text-anchor="middle">with task and</text>
<text x="239.9" y="428.3" font-size="3.6" fill="#444444" text-anchor="middle">failure message</text>
<path d="M239.8 442.9L246.3 449.4L239.8 455.9L233.3 449.4Z" fill="#ffffff" stroke="#333333" stroke-width="0.9"/>
<path d="M236.5 449.4H243.1M239.8 446.1V452.7" stroke="#111" stroke-width="1.5"/>
<rect x="199.6" y="438.8" width="27" height="21.5" rx="2.6" fill="#ffffff" stroke="#6f6f6f" stroke-width="1"/>
<circle cx="202.6" cy="441.8" r="1.6" fill="none" stroke="#333" stroke-width="0.8" stroke-dasharray="1 0.6"/>
<text x="213.1" y="449.1" font-size="3.6" fill="#444444" text-anchor="middle">Send Email</text>
<text x="213.1" y="452.7" font-size="3.6" fill="#444444" text-anchor="middle">Notification</text>
<circle cx="183.5" cy="449.7" r="5" fill="#fff" stroke="#222" stroke-width="1.4"/>
<rect x="226.6" y="467.5" width="26.7" height="21.5" rx="2.6" fill="#ffffff" stroke="#6f6f6f" stroke-width="1"/>
<circle cx="229.6" cy="470.5" r="1.6" fill="none" stroke="#333" stroke-width="0.8" stroke-dasharray="1 0.6"/>
<text x="239.9" y="479.5" font-size="3.6" fill="#444444" text-anchor="middle">Post to kafka</text>
<circle cx="239.8" cy="504.8" r="5" fill="#fff" stroke="#222" stroke-width="1.4"/>
<rect x="263.9" y="331" width="26.7" height="21.5" rx="2.6" fill="#ffffff" stroke="#6f6f6f" stroke-width="1"/>
<circle cx="266.9" cy="334" r="1.6" fill="none" stroke="#333" stroke-width="0.8" stroke-dasharray="1 0.6"/>
<text x="277.2" y="343" font-size="3.6" fill="#444444" text-anchor="middle">Post to kafka</text>
<rect x="263.9" y="291.1" width="26.7" height="21.5" rx="2.6" fill="#fffdf9" stroke="#b98a5e" stroke-width="1"/>
<circle cx="266.9" cy="294.1" r="1.6" fill="none" stroke="#333" stroke-width="0.8" stroke-dasharray="1 0.6"/>
<text x="277.2" y="303.1" font-size="3.6" fill="#444444" text-anchor="middle">Retry</text>
<rect x="298.6" y="245.8" width="27" height="21.5" rx="2.6" fill="#fffdf9" stroke="#b98a5e" stroke-width="1"/>
<circle cx="301.6" cy="248.8" r="1.6" fill="none" stroke="#333" stroke-width="0.8" stroke-dasharray="1 0.6"/>
<text x="312.1" y="256" font-size="3.6" fill="#444444" text-anchor="middle">Send Email</text>
<text x="312.1" y="259.6" font-size="3.6" fill="#444444" text-anchor="middle">Notification</text>
<rect x="352.2" y="245.8" width="26.4" height="21.5" rx="2.6" fill="#fffdf9" stroke="#b98a5e" stroke-width="1"/>
<circle cx="355.2" cy="248.8" r="1.6" fill="none" stroke="#333" stroke-width="0.8" stroke-dasharray="1 0.6"/>
<text x="365.4" y="257.8" font-size="3.6" fill="#444444" text-anchor="middle">Post to kafka</text>
<rect x="352.2" y="281.1" width="26.4" height="21.2" rx="2.6" fill="#fffdf9" stroke="#b98a5e" stroke-width="1"/>
<circle cx="355.2" cy="284.1" r="1.6" fill="none" stroke="#333" stroke-width="0.8" stroke-dasharray="1 0.6"/>
<text x="365.4" y="289.3" font-size="3.6" fill="#444444" text-anchor="middle">Update Job</text>
<text x="365.4" y="292.9" font-size="3.6" fill="#444444" text-anchor="middle">with task and</text>
<text x="365.4" y="296.5" font-size="3.6" fill="#444444" text-anchor="middle">failure message</text>
<path d="M365.1 314.1L371.6 320.6L365.1 327.1L358.6 320.6Z" fill="#fcd9a8" stroke="#7a5a3a" stroke-width="0.9"/>
<path d="M362.7 318.2L367.5 323M367.5 318.2L362.7 323" stroke="#222" stroke-width="1.3"/>
<rect x="352.2" y="341.9" width="26.4" height="21.5" rx="2.6" fill="#fffdf9" stroke="#b98a5e" stroke-width="1"/>
<circle cx="355.2" cy="344.9" r="1.6" fill="none" stroke="#333" stroke-width="0.8" stroke-dasharray="1 0.6"/>
<text x="365.4" y="352.1" font-size="3.6" fill="#444444" text-anchor="middle">Check if Old</text>
<text x="365.4" y="355.7" font-size="3.6" fill="#444444" text-anchor="middle">RPD is offline</text>
<path d="M365.1 378.4L371.6 384.9L365.1 391.4L358.6 384.9Z" fill="#fcd9a8" stroke="#7a5a3a" stroke-width="0.9"/>
<path d="M362.7 382.5L367.5 387.3M367.5 382.5L362.7 387.3" stroke="#222" stroke-width="1.3"/>
<path d="M330.1 378.4L336.6 384.9L330.1 391.4L323.6 384.9Z" fill="#ffffff" stroke="#333333" stroke-width="0.9"/>
<path d="M327.7 382.5L332.5 387.3M332.5 382.5L327.7 387.3" stroke="#222" stroke-width="1.3"/>
<rect x="394.7" y="374.3" width="26.4" height="21.2" rx="2.6" fill="#fffdf9" stroke="#b98a5e" stroke-width="1"/>
<circle cx="397.7" cy="377.3" r="1.6" fill="none" stroke="#333" stroke-width="0.8" stroke-dasharray="1 0.6"/>
<text x="407.9" y="382.6" font-size="3.6" fill="#444444" text-anchor="middle">Update RPD</text>
<text x="407.9" y="386.2" font-size="3.6" fill="#444444" text-anchor="middle">with MAC</text>
<text x="407.9" y="389.8" font-size="3.6" fill="#444444" text-anchor="middle">address</text>
<rect x="380.9" y="365.4" width="9.5" height="8" fill="#fff" stroke="#555" stroke-width="0.7"/>
<path d="M383.6 367.4L387.6 371.4M387.6 368.9V371.4H385.1" fill="none" stroke="#222" stroke-width="0.7"/>
<rect x="317.8" y="412.7" width="26.4" height="21.5" rx="2.6" fill="#ffffff" stroke="#6f6f6f" stroke-width="1"/>
<circle cx="320.8" cy="415.7" r="1.6" fill="none" stroke="#333" stroke-width="0.8" stroke-dasharray="1 0.6"/>
<text x="331" y="421.1" font-size="3.6" fill="#444444" text-anchor="middle">Update Job</text>
<text x="331" y="424.7" font-size="3.6" fill="#444444" text-anchor="middle">with task and</text>
<text x="331" y="428.3" font-size="3.6" fill="#444444" text-anchor="middle">failure message</text>
<path d="M333.6 442.9L340.1 449.4L333.6 455.9L327.1 449.4Z" fill="#ffffff" stroke="#333333" stroke-width="0.9"/>
<path d="M330.3 449.4H336.9M333.6 446.1V452.7" stroke="#111" stroke-width="1.5"/>
<rect x="290.5" y="438.8" width="26.7" height="21.5" rx="2.6" fill="#ffffff" stroke="#6f6f6f" stroke-width="1"/>
<circle cx="293.5" cy="441.8" r="1.6" fill="none" stroke="#333" stroke-width="0.8" stroke-dasharray="1 0.6"/>
<text x="303.9" y="449.1" font-size="3.6" fill="#444444" text-anchor="middle">Send Email</text>
<text x="303.9" y="452.7" font-size="3.6" fill="#444444" text-anchor="middle">Notification</text>
<circle cx="274.8" cy="449.7" r="5" fill="#fff" stroke="#222" stroke-width="1.4"/>
<rect x="320.7" y="464.7" width="26.7" height="21.5" rx="2.6" fill="#ffffff" stroke="#6f6f6f" stroke-width="1"/>
<circle cx="323.7" cy="467.7" r="1.6" fill="none" stroke="#333" stroke-width="0.8" stroke-dasharray="1 0.6"/>
<text x="334" y="476.7" font-size="3.6" fill="#444444" text-anchor="middle">Post to kafka</text>
<circle cx="333.6" cy="504.8" r="5" fill="#fff" stroke="#222" stroke-width="1.4"/>
<rect x="432" y="374.3" width="26.7" height="21.2" rx="2.6" fill="#ffffff" stroke="#6f6f6f" stroke-width="1"/>
<circle cx="435" cy="377.3" r="1.6" fill="none" stroke="#333" stroke-width="0.8" stroke-dasharray="1 0.6"/>
<text x="445.4" y="384.4" font-size="3.6" fill="#444444" text-anchor="middle">Generate</text>
<text x="445.4" y="388" font-size="3.6" fill="#444444" text-anchor="middle">Intended Config</text>
<path d="M474.5 378.4L481 384.9L474.5 391.4L468 384.9Z" fill="#ffffff" stroke="#333333" stroke-width="0.9"/>
<path d="M472.1 382.5L476.9 387.3M476.9 382.5L472.1 387.3" stroke="#222" stroke-width="1.3"/>
<rect x="490.9" y="374.3" width="26.7" height="21.2" rx="2.6" fill="#ffffff" stroke="#6f6f6f" stroke-width="1"/>
<circle cx="493.9" cy="377.3" r="1.6" fill="none" stroke="#333" stroke-width="0.8" stroke-dasharray="1 0.6"/>
<text x="504.2" y="381.5" font-size="3.0" fill="#444444" text-anchor="middle">Store intended</text>
<text x="504.2" y="384.5" font-size="3.0" fill="#444444" text-anchor="middle">config in DB</text>
<text x="504.2" y="387.5" font-size="3.0" fill="#444444" text-anchor="middle">with latest</text>
<text x="504.2" y="390.5" font-size="3.0" fill="#444444" text-anchor="middle">Activate Device</text>
<path d="M552 378.4L558.5 384.9L552 391.4L545.5 384.9Z" fill="#ffffff" stroke="#333333" stroke-width="0.9"/>
<path d="M549.6 382.5L554.4 387.3M554.4 382.5L549.6 387.3" stroke="#222" stroke-width="1.3"/>
<rect x="597.3" y="374.3" width="27" height="21.2" rx="2.6" fill="#ffffff" stroke="#6f6f6f" stroke-width="1"/>
<circle cx="600.3" cy="377.3" r="1.6" fill="none" stroke="#333" stroke-width="0.8" stroke-dasharray="1 0.6"/>
<text x="610.8" y="384.4" font-size="3.6" fill="#444444" text-anchor="middle">Precheck Data</text>
<text x="610.8" y="388" font-size="3.6" fill="#444444" text-anchor="middle">Capture</text>
<path d="M648.6 378.4L655.1 384.9L648.6 391.4L642.1 384.9Z" fill="#ffffff" stroke="#333333" stroke-width="0.9"/>
<path d="M646.2 382.5L651 387.3M651 382.5L646.2 387.3" stroke="#222" stroke-width="1.3"/>
<rect x="675.3" y="374.3" width="26.4" height="21.2" rx="2.6" fill="#ffffff" stroke="#6f6f6f" stroke-width="1"/>
<circle cx="678.3" cy="377.3" r="1.6" fill="none" stroke="#333" stroke-width="0.8" stroke-dasharray="1 0.6"/>
<text x="688.5" y="382.6" font-size="3.6" fill="#444444" text-anchor="middle">Apply Intended</text>
<text x="688.5" y="386.2" font-size="3.6" fill="#444444" text-anchor="middle">Config to</text>
<text x="688.5" y="389.8" font-size="3.6" fill="#444444" text-anchor="middle">vCMTS</text>
<path d="M733.5 378.4L740 384.9L733.5 391.4L727 384.9Z" fill="#ffffff" stroke="#333333" stroke-width="0.9"/>
<path d="M731.1 382.5L735.9 387.3M735.9 382.5L731.1 387.3" stroke="#222" stroke-width="1.3"/>
<rect x="461.6" y="320.9" width="26.7" height="21.5" rx="2.6" fill="#ffffff" stroke="#6f6f6f" stroke-width="1"/>
<circle cx="464.6" cy="323.9" r="1.6" fill="none" stroke="#333" stroke-width="0.8" stroke-dasharray="1 0.6"/>
<text x="474.9" y="329.4" font-size="3.6" fill="#444444" text-anchor="middle">Error, Post,</text>
<text x="474.9" y="333" font-size="3.6" fill="#444444" text-anchor="middle">Retry &amp;</text>
<text x="474.9" y="336.6" font-size="3.6" fill="#444444" text-anchor="middle">Rollback</text>
<path d="M474.5 298.1L481 304.6L474.5 311.1L468 304.6Z" fill="#ffffff" stroke="#333333" stroke-width="0.9"/>
<path d="M472.1 302.2L476.9 307M476.9 302.2L472.1 307" stroke="#222" stroke-width="1.3"/>
<rect x="461.6" y="258.7" width="26.7" height="22.1" rx="2.6" fill="#ffffff" stroke="#6f6f6f" stroke-width="1"/>
<circle cx="464.6" cy="261.7" r="1.6" fill="none" stroke="#333" stroke-width="0.8" stroke-dasharray="1 0.6"/>
<text x="474.9" y="271" font-size="3.6" fill="#444444" text-anchor="middle">Update DB</text>
<circle cx="474.5" cy="240.6" r="5" fill="#fff" stroke="#222" stroke-width="1.4"/>
<rect x="490.3" y="343.9" width="9.5" height="8" fill="#fff" stroke="#555" stroke-width="0.7"/>
<path d="M493 345.9L497 349.9M497 347.4V349.9H494.5" fill="none" stroke="#222" stroke-width="0.7"/>
<rect x="597.3" y="331" width="27" height="21.5" rx="2.6" fill="#ffffff" stroke="#6f6f6f" stroke-width="1"/>
<circle cx="600.3" cy="334" r="1.6" fill="none" stroke="#333" stroke-width="0.8" stroke-dasharray="1 0.6"/>
<text x="610.8" y="343" font-size="3.6" fill="#444444" text-anchor="middle">Post to kafka</text>
<rect x="597.3" y="285.9" width="27" height="21.5" rx="2.6" fill="#ffffff" stroke="#6f6f6f" stroke-width="1"/>
<circle cx="600.3" cy="288.9" r="1.6" fill="none" stroke="#333" stroke-width="0.8" stroke-dasharray="1 0.6"/>
<text x="610.8" y="298" font-size="3.6" fill="#444444" text-anchor="middle">Retry</text>
<rect x="635.1" y="259.3" width="27.3" height="21.5" rx="2.6" fill="#ffffff" stroke="#6f6f6f" stroke-width="1"/>
<circle cx="638.1" cy="262.3" r="1.6" fill="none" stroke="#333" stroke-width="0.8" stroke-dasharray="1 0.6"/>
<text x="648.8" y="269.5" font-size="3.6" fill="#444444" text-anchor="middle">Send Email</text>
<text x="648.8" y="273.1" font-size="3.6" fill="#444444" text-anchor="middle">Notification</text>
<rect x="635.1" y="333.8" width="27.3" height="21.5" rx="2.6" fill="#ffffff" stroke="#6f6f6f" stroke-width="1"/>
<circle cx="638.1" cy="336.8" r="1.6" fill="none" stroke="#333" stroke-width="0.8" stroke-dasharray="1 0.6"/>
<text x="648.8" y="342.3" font-size="3.6" fill="#444444" text-anchor="middle">Update Job</text>
<text x="648.8" y="345.9" font-size="3.6" fill="#444444" text-anchor="middle">with task and</text>
<text x="648.8" y="349.5" font-size="3.6" fill="#444444" text-anchor="middle">failure message</text>
<rect x="635.1" y="296.6" width="27.3" height="21.5" rx="2.6" fill="#ffffff" stroke="#6f6f6f" stroke-width="1"/>
<circle cx="638.1" cy="299.6" r="1.6" fill="none" stroke="#333" stroke-width="0.8" stroke-dasharray="1 0.6"/>
<text x="648.8" y="308.6" font-size="3.6" fill="#444444" text-anchor="middle">Post to kafka</text>
<rect x="704" y="397.8" width="9.2" height="7.2" fill="#fff" stroke="#555" stroke-width="0.7"/>
<path d="M706.6 399.4L710.6 403.4M710.6 400.9V403.4H708.1" fill="none" stroke="#222" stroke-width="0.7"/>
<rect x="720.3" y="317.5" width="26.7" height="22.1" rx="2.6" fill="#ffffff" stroke="#6f6f6f" stroke-width="1"/>
<circle cx="723.3" cy="320.5" r="1.6" fill="none" stroke="#333" stroke-width="0.8" stroke-dasharray="1 0.6"/>
<text x="733.7" y="326.2" font-size="3.6" fill="#444444" text-anchor="middle">Error, Post,</text>
<text x="733.7" y="329.8" font-size="3.6" fill="#444444" text-anchor="middle">Retry &amp;</text>
<text x="733.7" y="333.4" font-size="3.6" fill="#444444" text-anchor="middle">Rollback</text>
<path d="M733.5 295.2L740 301.7L733.5 308.2L727 301.7Z" fill="#ffffff" stroke="#333333" stroke-width="0.9"/>
<path d="M731.1 299.3L735.9 304.1M735.9 299.3L731.1 304.1" stroke="#222" stroke-width="1.3"/>
<rect x="720.3" y="256.4" width="26.7" height="21.5" rx="2.6" fill="#ffffff" stroke="#6f6f6f" stroke-width="1"/>
<circle cx="723.3" cy="259.4" r="1.6" fill="none" stroke="#333" stroke-width="0.8" stroke-dasharray="1 0.6"/>
<text x="733.7" y="268.4" font-size="3.6" fill="#444444" text-anchor="middle">Update DB</text>
<circle cx="733.5" cy="237.7" r="5" fill="#fff" stroke="#222" stroke-width="1.4"/>
<rect x="749.3" y="341.9" width="9.2" height="7.2" fill="#fff" stroke="#555" stroke-width="0.7"/>
<path d="M751.9 343.5L755.9 347.5M755.9 345V347.5H753.4" fill="none" stroke="#222" stroke-width="0.7"/>
<path d="M819.4 378.1L825.9 384.6L819.4 391.1L812.9 384.6Z" fill="#ffffff" stroke="#333333" stroke-width="0.9"/>
<path d="M817 382.2L821.8 387M821.8 382.2L817 387" stroke="#222" stroke-width="1.3"/>
<rect x="851.2" y="373.7" width="27" height="21.5" rx="2.6" fill="#ffffff" stroke="#6f6f6f" stroke-width="1"/>
<circle cx="854.2" cy="376.7" r="1.6" fill="none" stroke="#333" stroke-width="0.8" stroke-dasharray="1 0.6"/>
<text x="864.7" y="382.1" font-size="3.6" fill="#444444" text-anchor="middle">Check if RPD</text>
<text x="864.7" y="385.7" font-size="3.6" fill="#444444" text-anchor="middle">online and</text>
<text x="864.7" y="389.3" font-size="3.6" fill="#444444" text-anchor="middle">locked</text>
<rect x="880.5" y="397.5" width="9.2" height="7.7" fill="#fff" stroke="#555" stroke-width="0.7"/>
<path d="M883.1 399.4L887.1 403.4M887.1 400.9V403.4H884.6" fill="none" stroke="#222" stroke-width="0.7"/>
<path d="M920.6 378.1L927.1 384.6L920.6 391.1L914.1 384.6Z" fill="#ffffff" stroke="#333333" stroke-width="0.9"/>
<path d="M918.2 382.2L923 387M923 382.2L918.2 387" stroke="#222" stroke-width="1.3"/>
<path d="M971.4 378.1L977.9 384.6L971.4 391.1L964.9 384.6Z" fill="#ffffff" stroke="#333333" stroke-width="0.9"/>
<path d="M969 382.2L973.8 387M973.8 382.2L969 387" stroke="#222" stroke-width="1.3"/>
<rect x="1011.3" y="373.7" width="27" height="21.5" rx="2.6" fill="#ffffff" stroke="#6f6f6f" stroke-width="1"/>
<circle cx="1014.3" cy="376.7" r="1.6" fill="none" stroke="#333" stroke-width="0.8" stroke-dasharray="1 0.6"/>
<text x="1024.8" y="383.9" font-size="3.6" fill="#444444" text-anchor="middle">Post Check</text>
<text x="1024.8" y="387.5" font-size="3.6" fill="#444444" text-anchor="middle">CMs(listner task)</text>
<rect x="1040.3" y="397.5" width="9.5" height="7.7" fill="#fff" stroke="#555" stroke-width="0.7"/>
<path d="M1043 399.4L1047 403.4M1047 400.9V403.4H1044.5" fill="none" stroke="#222" stroke-width="0.7"/>
<path d="M1067.8 378.1L1074.3 384.6L1067.8 391.1L1061.3 384.6Z" fill="#ffffff" stroke="#333333" stroke-width="0.9"/>
<path d="M1065.4 382.2L1070.2 387M1070.2 382.2L1065.4 387" stroke="#222" stroke-width="1.3"/>
<rect x="907.2" y="341.6" width="27" height="22.1" rx="2.6" fill="#ffffff" stroke="#6f6f6f" stroke-width="1"/>
<circle cx="910.2" cy="344.6" r="1.6" fill="none" stroke="#333" stroke-width="0.8" stroke-dasharray="1 0.6"/>
<text x="920.6" y="350.3" font-size="3.6" fill="#444444" text-anchor="middle">Error, Post,</text>
<text x="920.6" y="353.9" font-size="3.6" fill="#444444" text-anchor="middle">Retry &amp;</text>
<text x="920.6" y="357.5" font-size="3.6" fill="#444444" text-anchor="middle">Rollback</text>
<rect x="936.4" y="365.4" width="9.2" height="8" fill="#fff" stroke="#555" stroke-width="0.7"/>
<path d="M939 367.4L943 371.4M943 368.9V371.4H940.5" fill="none" stroke="#222" stroke-width="0.7"/>
<path d="M920.6 297.8L927.1 304.3L920.6 310.8L914.1 304.3Z" fill="#ffffff" stroke="#333333" stroke-width="0.9"/>
<path d="M918.2 301.9L923 306.7M923 301.9L918.2 306.7" stroke="#222" stroke-width="1.3"/>
<rect x="907.2" y="245.5" width="27" height="22.1" rx="2.6" fill="#ffffff" stroke="#6f6f6f" stroke-width="1"/>
<circle cx="910.2" cy="248.5" r="1.6" fill="none" stroke="#333" stroke-width="0.8" stroke-dasharray="1 0.6"/>
<text x="920.6" y="257.8" font-size="3.6" fill="#444444" text-anchor="middle">Update DB</text>
<rect x="936.4" y="239.7" width="9.2" height="7.2" fill="#fff" stroke="#555" stroke-width="0.7"/>
<path d="M939 241.3L943 245.3M943 242.8V245.3H940.5" fill="none" stroke="#222" stroke-width="0.7"/>
<rect x="907.2" y="216.5" width="27" height="21.5" rx="2.6" fill="#ffffff" stroke="#6f6f6f" stroke-width="1"/>
<circle cx="910.2" cy="219.5" r="1.6" fill="none" stroke="#333" stroke-width="0.8" stroke-dasharray="1 0.6"/>
<text x="920.6" y="224.9" font-size="3.6" fill="#444444" text-anchor="middle">Apply Intended</text>
<text x="920.6" y="228.5" font-size="3.6" fill="#444444" text-anchor="middle">Config to</text>
<text x="920.6" y="232.1" font-size="3.6" fill="#444444" text-anchor="middle">vCMTS</text>
<path d="M920.6 188.5L927.1 195L920.6 201.5L914.1 195Z" fill="#ffffff" stroke="#333333" stroke-width="0.9"/>
<path d="M918.2 192.6L923 197.4M923 192.6L918.2 197.4" stroke="#222" stroke-width="1.3"/>
<circle cx="920.6" cy="165.7" r="5" fill="#fff" stroke="#222" stroke-width="1.4"/>
<rect x="957.4" y="184.4" width="27" height="21.5" rx="2.6" fill="#ffffff" stroke="#6f6f6f" stroke-width="1"/>
<circle cx="960.4" cy="187.4" r="1.6" fill="none" stroke="#333" stroke-width="0.8" stroke-dasharray="1 0.6"/>
<text x="970.8" y="192.8" font-size="3.6" fill="#444444" text-anchor="middle">Update Job</text>
<text x="970.8" y="196.4" font-size="3.6" fill="#444444" text-anchor="middle">with task and</text>
<text x="970.8" y="200" font-size="3.6" fill="#444444" text-anchor="middle">failure message</text>
<rect x="1003.3" y="184.4" width="27" height="21.5" rx="2.6" fill="#ffffff" stroke="#6f6f6f" stroke-width="1"/>
<circle cx="1006.3" cy="187.4" r="1.6" fill="none" stroke="#333" stroke-width="0.8" stroke-dasharray="1 0.6"/>
<text x="1016.7" y="196.4" font-size="3.6" fill="#444444" text-anchor="middle">Retry</text>
<rect x="1054.6" y="317.8" width="26.7" height="21.5" rx="2.6" fill="#ffffff" stroke="#6f6f6f" stroke-width="1"/>
<circle cx="1057.6" cy="320.8" r="1.6" fill="none" stroke="#333" stroke-width="0.8" stroke-dasharray="1 0.6"/>
<text x="1067.9" y="326.2" font-size="3.6" fill="#444444" text-anchor="middle">Error, Post,</text>
<text x="1067.9" y="329.8" font-size="3.6" fill="#444444" text-anchor="middle">Retry &amp;</text>
<text x="1067.9" y="333.4" font-size="3.6" fill="#444444" text-anchor="middle">Rollback</text>
<rect x="1083.3" y="341.3" width="9.5" height="8" fill="#fff" stroke="#555" stroke-width="0.7"/>
<path d="M1086 343.3L1090 347.3M1090 344.8V347.3H1087.5" fill="none" stroke="#222" stroke-width="0.7"/>
<path d="M1067.8 294.9L1074.3 301.4L1067.8 307.9L1061.3 301.4Z" fill="#ffffff" stroke="#333333" stroke-width="0.9"/>
<path d="M1065.4 299L1070.2 303.8M1070.2 299L1065.4 303.8" stroke="#222" stroke-width="1.3"/>
<rect x="1054.6" y="256.7" width="26.7" height="21.5" rx="2.6" fill="#ffffff" stroke="#6f6f6f" stroke-width="1"/>
<circle cx="1057.6" cy="259.7" r="1.6" fill="none" stroke="#333" stroke-width="0.8" stroke-dasharray="1 0.6"/>
<text x="1067.9" y="268.7" font-size="3.6" fill="#444444" text-anchor="middle">Update DB</text>
<rect x="1083.3" y="250.4" width="9.5" height="7.7" fill="#fff" stroke="#555" stroke-width="0.7"/>
<path d="M1086 252.2L1090 256.2M1090 253.7V256.2H1087.5" fill="none" stroke="#222" stroke-width="0.7"/>
<rect x="1054.6" y="227.4" width="26.7" height="21.5" rx="2.6" fill="#ffffff" stroke="#6f6f6f" stroke-width="1"/>
<circle cx="1057.6" cy="230.4" r="1.6" fill="none" stroke="#333" stroke-width="0.8" stroke-dasharray="1 0.6"/>
<text x="1067.9" y="235.8" font-size="3.6" fill="#444444" text-anchor="middle">Apply Intended</text>
<text x="1067.9" y="239.4" font-size="3.6" fill="#444444" text-anchor="middle">Config to</text>
<text x="1067.9" y="243" font-size="3.6" fill="#444444" text-anchor="middle">vCMTS</text>
<path d="M1067.8 198.8L1074.3 205.3L1067.8 211.8L1061.3 205.3Z" fill="#ffffff" stroke="#333333" stroke-width="0.9"/>
<path d="M1065.4 202.9L1070.2 207.7M1070.2 202.9L1065.4 207.7" stroke="#222" stroke-width="1.3"/>
<circle cx="1067.8" cy="179.2" r="5" fill="#fff" stroke="#222" stroke-width="1.4"/>
<rect x="1104.9" y="195" width="26.7" height="21.5" rx="2.6" fill="#ffffff" stroke="#6f6f6f" stroke-width="1"/>
<circle cx="1107.9" cy="198" r="1.6" fill="none" stroke="#333" stroke-width="0.8" stroke-dasharray="1 0.6"/>
<text x="1118.2" y="203.4" font-size="3.6" fill="#444444" text-anchor="middle">Update Job</text>
<text x="1118.2" y="207" font-size="3.6" fill="#444444" text-anchor="middle">with task and</text>
<text x="1118.2" y="210.6" font-size="3.6" fill="#444444" text-anchor="middle">failure message</text>
<rect x="1153.1" y="195" width="26.7" height="21.5" rx="2.6" fill="#ffffff" stroke="#6f6f6f" stroke-width="1"/>
<circle cx="1156.1" cy="198" r="1.6" fill="none" stroke="#333" stroke-width="0.8" stroke-dasharray="1 0.6"/>
<text x="1166.4" y="207" font-size="3.6" fill="#444444" text-anchor="middle">Retry</text>
<rect x="1100" y="373.7" width="27.3" height="21.5" rx="2.6" fill="#ffffff" stroke="#6f6f6f" stroke-width="1"/>
<circle cx="1103" cy="376.7" r="1.6" fill="none" stroke="#333" stroke-width="0.8" stroke-dasharray="1 0.6"/>
<text x="1113.6" y="383.9" font-size="3.6" fill="#444444" text-anchor="middle">Save activation</text>
<text x="1113.6" y="387.5" font-size="3.6" fill="#444444" text-anchor="middle">status for RPD</text>
<rect x="1142.5" y="373.7" width="27" height="21.5" rx="2.6" fill="#ffffff" stroke="#6f6f6f" stroke-width="1"/>
<circle cx="1145.5" cy="376.7" r="1.6" fill="none" stroke="#333" stroke-width="0.8" stroke-dasharray="1 0.6"/>
<text x="1155.9" y="385.7" font-size="3.6" fill="#444444" text-anchor="middle">Post to kafka</text>
<path d="M1198.4 378.1L1204.9 384.6L1198.4 391.1L1191.9 384.6Z" fill="#fcd9a8" stroke="#7a5a3a" stroke-width="0.9"/>
<path d="M1196 382.2L1200.8 387M1200.8 382.2L1196 387" stroke="#222" stroke-width="1.3"/>
<rect x="1225.6" y="373.7" width="27" height="21.5" rx="2.6" fill="#ffffff" stroke="#6f6f6f" stroke-width="1"/>
<circle cx="1228.6" cy="376.7" r="1.6" fill="none" stroke="#333" stroke-width="0.8" stroke-dasharray="1 0.6"/>
<text x="1239.1" y="385.7" font-size="3.6" fill="#444444" text-anchor="middle">Post to kafka</text>
<rect x="1273.3" y="373.7" width="26.7" height="21.5" rx="2.6" fill="#ffffff" stroke="#6f6f6f" stroke-width="1"/>
<circle cx="1276.3" cy="376.7" r="1.6" fill="none" stroke="#333" stroke-width="0.8" stroke-dasharray="1 0.6"/>
<text x="1286.6" y="380.3" font-size="3.6" fill="#444444" text-anchor="middle">Send Email</text>
<text x="1286.6" y="383.9" font-size="3.6" fill="#444444" text-anchor="middle">Notification</text>
<text x="1286.6" y="387.5" font-size="3.6" fill="#444444" text-anchor="middle">with XPT</text>
<text x="1286.6" y="391.1" font-size="3.6" fill="#444444" text-anchor="middle">progress</text>
<rect x="1321.5" y="373.7" width="26.7" height="21.5" rx="2.6" fill="#ffffff" stroke="#6f6f6f" stroke-width="1"/>
<circle cx="1324.5" cy="376.7" r="1.6" fill="none" stroke="#333" stroke-width="0.8" stroke-dasharray="1 0.6"/>
<text x="1334.8" y="382.1" font-size="3.6" fill="#444444" text-anchor="middle">Send</text>
<text x="1334.8" y="385.7" font-size="3.6" fill="#444444" text-anchor="middle">XPERTtask</text>
<text x="1334.8" y="389.3" font-size="3.6" fill="#444444" text-anchor="middle">Sync request</text>
<path d="M1374.5 378.1L1381 384.6L1374.5 391.1L1368 384.6Z" fill="#ffffff" stroke="#333333" stroke-width="0.9"/>
<path d="M1372.1 382.2L1376.9 387M1376.9 382.2L1372.1 387" stroke="#222" stroke-width="1.3"/>
<circle cx="1406.7" cy="384.6" r="5.2" fill="#9c9c9c" stroke="#8a8a8a" stroke-width="0.6"/>
<circle cx="1406.7" cy="384.6" r="3.4" fill="#f4f4f4" stroke="#777" stroke-width="0.5"/>
<path d="M1406.7 384.6L1408.2 382.6M1406.7 384.6L1405.1 385.4" stroke="#777" stroke-width="0.5"/>
<rect x="1361.6" y="344.5" width="26.7" height="21.5" rx="2.6" fill="#ffffff" stroke="#6f6f6f" stroke-width="1"/>
<circle cx="1364.6" cy="347.5" r="1.6" fill="none" stroke="#333" stroke-width="0.8" stroke-dasharray="1 0.6"/>
<text x="1375" y="352.9" font-size="3.6" fill="#444444" text-anchor="middle">Update Job</text>
<text x="1375" y="356.5" font-size="3.6" fill="#444444" text-anchor="middle">with task and</text>
<text x="1375" y="360.1" font-size="3.6" fill="#444444" text-anchor="middle">failure message</text>
<rect x="1361.6" y="312.6" width="26.7" height="21.5" rx="2.6" fill="#ffffff" stroke="#6f6f6f" stroke-width="1"/>
<circle cx="1364.6" cy="315.6" r="1.6" fill="none" stroke="#333" stroke-width="0.8" stroke-dasharray="1 0.6"/>
<text x="1375" y="324.6" font-size="3.6" fill="#444444" text-anchor="middle">Post to kafka</text>
<rect x="1361.6" y="280.5" width="26.7" height="21.5" rx="2.6" fill="#ffffff" stroke="#6f6f6f" stroke-width="1"/>
<circle cx="1364.6" cy="283.5" r="1.6" fill="none" stroke="#333" stroke-width="0.8" stroke-dasharray="1 0.6"/>
<text x="1375" y="290.7" font-size="3.6" fill="#444444" text-anchor="middle">Send Email</text>
<text x="1375" y="294.3" font-size="3.6" fill="#444444" text-anchor="middle">Notification</text>
<rect x="1318.6" y="285.6" width="26.7" height="21.5" rx="2.6" fill="#ffffff" stroke="#6f6f6f" stroke-width="1"/>
<circle cx="1321.6" cy="288.6" r="1.6" fill="none" stroke="#333" stroke-width="0.8" stroke-dasharray="1 0.6"/>
<text x="1331.9" y="297.7" font-size="3.6" fill="#444444" text-anchor="middle">User input</text>
<rect x="1318.6" y="331.3" width="26.7" height="21.5" rx="2.6" fill="#ffffff" stroke="#6f6f6f" stroke-width="1"/>
<circle cx="1321.6" cy="334.3" r="1.6" fill="none" stroke="#333" stroke-width="0.8" stroke-dasharray="1 0.6"/>
<text x="1331.9" y="343.3" font-size="3.6" fill="#444444" text-anchor="middle">Post to kafka</text>
<rect x="1185.2" y="412.4" width="26.7" height="21.5" rx="2.6" fill="#fffdf9" stroke="#b98a5e" stroke-width="1"/>
<circle cx="1188.2" cy="415.4" r="1.6" fill="none" stroke="#333" stroke-width="0.8" stroke-dasharray="1 0.6"/>
<text x="1198.5" y="419.1" font-size="3.6" fill="#444444" text-anchor="middle">Send Email</text>
<text x="1198.5" y="422.7" font-size="3.6" fill="#444444" text-anchor="middle">Notification</text>
<text x="1198.5" y="426.3" font-size="3.6" fill="#444444" text-anchor="middle">- Activation Co</text>
<text x="1198.5" y="429.9" font-size="3.6" fill="#444444" text-anchor="middle">mplete</text>
<path d="M1374.5 420.2L1381 426.7L1374.5 433.2L1368 426.7Z" fill="#ffffff" stroke="#333333" stroke-width="0.9"/>
<path d="M1372.1 424.3L1376.9 429.1M1376.9 424.3L1372.1 429.1" stroke="#222" stroke-width="1.3"/>
<rect x="1361.6" y="440.4" width="26.7" height="22.1" rx="2.6" fill="#ffffff" stroke="#6f6f6f" stroke-width="1"/>
<circle cx="1364.6" cy="443.4" r="1.6" fill="none" stroke="#333" stroke-width="0.8" stroke-dasharray="1 0.6"/>
<text x="1375" y="449.1" font-size="3.6" fill="#444444" text-anchor="middle">Update Job</text>
<text x="1375" y="452.7" font-size="3.6" fill="#444444" text-anchor="middle">with task and</text>
<text x="1375" y="456.3" font-size="3.6" fill="#444444" text-anchor="middle">failure message</text>
<rect x="1361.6" y="475.4" width="26.7" height="21.5" rx="2.6" fill="#ffffff" stroke="#6f6f6f" stroke-width="1"/>
<circle cx="1364.6" cy="478.4" r="1.6" fill="none" stroke="#333" stroke-width="0.8" stroke-dasharray="1 0.6"/>
<text x="1375" y="487.5" font-size="3.6" fill="#444444" text-anchor="middle">Post to kafka</text>
<rect x="1331.8" y="510.1" width="27" height="21.5" rx="2.6" fill="#ffffff" stroke="#6f6f6f" stroke-width="1"/>
<circle cx="1334.8" cy="513.1" r="1.6" fill="none" stroke="#333" stroke-width="0.8" stroke-dasharray="1 0.6"/>
<text x="1345.3" y="520.4" font-size="3.6" fill="#444444" text-anchor="middle">Send Email</text>
<text x="1345.3" y="524" font-size="3.6" fill="#444444" text-anchor="middle">Notification</text>
<rect x="1299.9" y="488.6" width="26.7" height="21.5" rx="2.6" fill="#ffffff" stroke="#6f6f6f" stroke-width="1"/>
<circle cx="1302.9" cy="491.6" r="1.6" fill="none" stroke="#333" stroke-width="0.8" stroke-dasharray="1 0.6"/>
<text x="1313.3" y="500.7" font-size="3.6" fill="#444444" text-anchor="middle">User task</text>
<rect x="1299.9" y="448.5" width="26.7" height="22.1" rx="2.6" fill="#ffffff" stroke="#6f6f6f" stroke-width="1"/>
<circle cx="1302.9" cy="451.5" r="1.6" fill="none" stroke="#333" stroke-width="0.8" stroke-dasharray="1 0.6"/>
<text x="1313.3" y="460.8" font-size="3.6" fill="#444444" text-anchor="middle">Post to kafka</text>
<circle cx="1406.7" cy="384.6" r="5.2" fill="#9c9c9c" stroke="#8a8a8a" stroke-width="0.6"/>
<circle cx="1406.7" cy="384.6" r="3.4" fill="#f4f4f4" stroke="#777" stroke-width="0.5"/>
<path d="M1406.7 384.6L1408.2 382.6M1406.7 384.6L1405.1 385.4" stroke="#777" stroke-width="0.5"/>
<rect x="1436" y="373.7" width="26.7" height="21.5" rx="2.6" fill="#ffffff" stroke="#6f6f6f" stroke-width="1"/>
<circle cx="1439" cy="376.7" r="1.6" fill="none" stroke="#333" stroke-width="0.8" stroke-dasharray="1 0.6"/>
<text x="1449.3" y="383.9" font-size="3.6" fill="#444444" text-anchor="middle">Retrieve Node</text>
<text x="1449.3" y="387.5" font-size="3.6" fill="#444444" text-anchor="middle">IDs for RPD</text>
<path d="M1492.2 378.1L1498.7 384.6L1492.2 391.1L1485.7 384.6Z" fill="#ffffff" stroke="#333333" stroke-width="0.9"/>
<path d="M1489.8 382.2L1494.6 387M1494.6 382.2L1489.8 387" stroke="#222" stroke-width="1.3"/>
<rect x="1513.4" y="373.7" width="27" height="21.5" rx="2.6" fill="#ffffff" stroke="#6f6f6f" stroke-width="1"/>
<circle cx="1516.4" cy="376.7" r="1.6" fill="none" stroke="#333" stroke-width="0.8" stroke-dasharray="1 0.6"/>
<text x="1526.9" y="383.9" font-size="3.6" fill="#444444" text-anchor="middle">Configure port</text>
<text x="1526.9" y="387.5" font-size="3.6" fill="#444444" text-anchor="middle">names</text>
<path d="M1563.9 378.1L1570.4 384.6L1563.9 391.1L1557.4 384.6Z" fill="#ffffff" stroke="#333333" stroke-width="0.9"/>
<path d="M1561.5 382.2L1566.3 387M1566.3 382.2L1561.5 387" stroke="#222" stroke-width="1.3"/>
<circle cx="1596.1" cy="384.6" r="5.2" fill="#9c9c9c" stroke="#8a8a8a" stroke-width="0.6"/>
<circle cx="1596.1" cy="384.6" r="3.4" fill="#f4f4f4" stroke="#777" stroke-width="0.5"/>
<path d="M1596.1 384.6L1597.6 382.6M1596.1 384.6L1594.5 385.4" stroke="#777" stroke-width="0.5"/>
<rect x="1614.7" y="373.7" width="26.7" height="21.5" rx="2.6" fill="#ffffff" stroke="#6f6f6f" stroke-width="1"/>
<circle cx="1617.7" cy="376.7" r="1.6" fill="none" stroke="#333" stroke-width="0.8" stroke-dasharray="1 0.6"/>
<text x="1628.1" y="383.9" font-size="3.6" fill="#444444" text-anchor="middle">Validate</text>
<text x="1628.1" y="387.5" font-size="3.6" fill="#444444" text-anchor="middle">configuration</text>
<path d="M1657.7 378.1L1664.2 384.6L1657.7 391.1L1651.2 384.6Z" fill="#ffffff" stroke="#333333" stroke-width="0.9"/>
<path d="M1655.3 382.2L1660.1 387M1660.1 382.2L1655.3 387" stroke="#222" stroke-width="1.3"/>
<rect x="1681.6" y="373.7" width="27" height="21.5" rx="2.6" fill="#ffffff" stroke="#6f6f6f" stroke-width="1"/>
<circle cx="1684.6" cy="376.7" r="1.6" fill="none" stroke="#333" stroke-width="0.8" stroke-dasharray="1 0.6"/>
<text x="1695" y="385.7" font-size="3.6" fill="#444444" text-anchor="middle">Post to kafka</text>
<circle cx="1726.6" cy="384.6" r="5" fill="#fff" stroke="#222" stroke-width="1.4"/>
<path d="M1449.2 401.5L1455.7 408L1449.2 414.5L1442.7 408Z" fill="#ffffff" stroke="#333333" stroke-width="0.9"/>
<path d="M1446.8 405.6L1451.6 410.4M1451.6 405.6L1446.8 410.4" stroke="#222" stroke-width="1.3"/>
<rect x="1492.2" y="253.8" width="27" height="21.5" rx="2.6" fill="#ffffff" stroke="#6f6f6f" stroke-width="1"/>
<circle cx="1495.2" cy="256.8" r="1.6" fill="none" stroke="#333" stroke-width="0.8" stroke-dasharray="1 0.6"/>
<text x="1505.7" y="265.8" font-size="3.6" fill="#444444" text-anchor="middle">Post to kafka</text>
<rect x="1566.8" y="253.8" width="27" height="21.5" rx="2.6" fill="#ffffff" stroke="#6f6f6f" stroke-width="1"/>
<circle cx="1569.8" cy="256.8" r="1.6" fill="none" stroke="#333" stroke-width="0.8" stroke-dasharray="1 0.6"/>
<text x="1580.3" y="265.8" font-size="3.6" fill="#444444" text-anchor="middle">User input</text>
<rect x="1550.7" y="344.5" width="26.7" height="21.5" rx="2.6" fill="#ffffff" stroke="#6f6f6f" stroke-width="1"/>
<circle cx="1553.7" cy="347.5" r="1.6" fill="none" stroke="#333" stroke-width="0.8" stroke-dasharray="1 0.6"/>
<text x="1564.1" y="352.9" font-size="3.6" fill="#444444" text-anchor="middle">Update Job</text>
<text x="1564.1" y="356.5" font-size="3.6" fill="#444444" text-anchor="middle">with task and</text>
<text x="1564.1" y="360.1" font-size="3.6" fill="#444444" text-anchor="middle">failure message</text>
<rect x="1550.7" y="307.7" width="26.7" height="21.5" rx="2.6" fill="#ffffff" stroke="#6f6f6f" stroke-width="1"/>
<circle cx="1553.7" cy="310.7" r="1.6" fill="none" stroke="#333" stroke-width="0.8" stroke-dasharray="1 0.6"/>
<text x="1564.1" y="319.8" font-size="3.6" fill="#444444" text-anchor="middle">Post to kafka</text>
<rect x="1550.7" y="277.6" width="26.7" height="22.1" rx="2.6" fill="#ffffff" stroke="#6f6f6f" stroke-width="1"/>
<circle cx="1553.7" cy="280.6" r="1.6" fill="none" stroke="#333" stroke-width="0.8" stroke-dasharray="1 0.6"/>
<text x="1564.1" y="288.1" font-size="3.6" fill="#444444" text-anchor="middle">Send Email</text>
<text x="1564.1" y="291.7" font-size="3.6" fill="#444444" text-anchor="middle">Notification</text>
<rect x="1513.4" y="302" width="27" height="21.5" rx="2.6" fill="#ffffff" stroke="#6f6f6f" stroke-width="1"/>
<circle cx="1516.4" cy="305" r="1.6" fill="none" stroke="#333" stroke-width="0.8" stroke-dasharray="1 0.6"/>
<text x="1526.9" y="314" font-size="3.6" fill="#444444" text-anchor="middle">User input</text>
<rect x="1513.4" y="339.3" width="27" height="21.5" rx="2.6" fill="#ffffff" stroke="#6f6f6f" stroke-width="1"/>
<circle cx="1516.4" cy="342.3" r="1.6" fill="none" stroke="#333" stroke-width="0.8" stroke-dasharray="1 0.6"/>
<text x="1526.9" y="351.3" font-size="3.6" fill="#444444" text-anchor="middle">Post to kafka</text>
<rect x="1644.3" y="344.5" width="27" height="21.5" rx="2.6" fill="#ffffff" stroke="#6f6f6f" stroke-width="1"/>
<circle cx="1647.3" cy="347.5" r="1.6" fill="none" stroke="#333" stroke-width="0.8" stroke-dasharray="1 0.6"/>
<text x="1657.7" y="352.9" font-size="3.6" fill="#444444" text-anchor="middle">Update Job</text>
<text x="1657.7" y="356.5" font-size="3.6" fill="#444444" text-anchor="middle">with task and</text>
<text x="1657.7" y="360.1" font-size="3.6" fill="#444444" text-anchor="middle">failure message</text>
<rect x="1644.3" y="312.6" width="27" height="21.5" rx="2.6" fill="#ffffff" stroke="#6f6f6f" stroke-width="1"/>
<circle cx="1647.3" cy="315.6" r="1.6" fill="none" stroke="#333" stroke-width="0.8" stroke-dasharray="1 0.6"/>
<text x="1657.7" y="324.6" font-size="3.6" fill="#444444" text-anchor="middle">Post to kafka</text>
<rect x="1644.3" y="272.7" width="27" height="21.5" rx="2.6" fill="#ffffff" stroke="#6f6f6f" stroke-width="1"/>
<circle cx="1647.3" cy="275.7" r="1.6" fill="none" stroke="#333" stroke-width="0.8" stroke-dasharray="1 0.6"/>
<text x="1657.7" y="283" font-size="3.6" fill="#444444" text-anchor="middle">Send Email</text>
<text x="1657.7" y="286.6" font-size="3.6" fill="#444444" text-anchor="middle">Notification</text>
<rect x="85.4" y="363.4" width="38.7" height="10" fill="#ffffff" fill-opacity="0.92"/>
<path d="M87.4 363.4H85.4V373.4H87.4" fill="none" stroke="#555" stroke-width="0.6"/>
<text x="86.9" y="367.8" font-size="3.2" fill="#444">Activation request</text>
<text x="86.9" y="371.6" font-size="3.2" fill="#444">received</text>
<rect x="133.3" y="413.6" width="69.7" height="18.6" fill="#ffffff" fill-opacity="0.92"/>
<path d="M135.3 413.6H133.3V432.2H135.3" fill="none" stroke="#555" stroke-width="0.6"/>
<text x="134.8" y="418" font-size="3.2" fill="#444">- In this we will retrieve the RPD Entity fro</text>
<text x="134.8" y="421.8" font-size="3.2" fill="#444">m the SOT using info received from the SCAM</text>
<text x="134.8" y="425.7" font-size="3.2" fill="#444">- take node_name, hub_clli to uniquely identi</text>
<text x="134.8" y="429.5" font-size="3.2" fill="#444">fy the RPD</text>
<rect x="261.3" y="402.1" width="52.2" height="25.2" fill="#ffffff" fill-opacity="0.92"/>
<path d="M263.3 402.1H261.3V427.4H263.3" fill="none" stroke="#555" stroke-width="0.6"/>
<text x="262.8" y="406.5" font-size="3.2" fill="#444">RPD Status check:</text>
<text x="262.8" y="410.4" font-size="3.2" fill="#444">New activation: STAGED</text>
<text x="262.8" y="414.2" font-size="3.2" fill="#444">Swap RPD: ONLINE/OFFLINE</text>
<text x="262.8" y="418" font-size="3.2" fill="#444"> </text>
<text x="262.8" y="421.9" font-size="3.2" fill="#444">MAC address should be unique</text>
<rect x="388.1" y="341.9" width="45.9" height="18.6" fill="#ffffff" fill-opacity="0.92"/>
<path d="M390.1 341.9H388.1V360.5H390.1" fill="none" stroke="#555" stroke-width="0.6"/>
<text x="389.6" y="346.3" font-size="3.2" fill="#444">- Update MAC address &amp; add</text>
<text x="389.6" y="350.1" font-size="3.2" fill="#444">expiry</text>
<text x="389.6" y="354" font-size="3.2" fill="#444">- Add Activate Intent Generati</text>
<text x="389.6" y="357.8" font-size="3.2" fill="#444">on date</text>
<rect x="509.5" y="250.7" width="55.4" height="10.9" fill="#ffffff" fill-opacity="0.92"/>
<path d="M511.5 250.7H509.5V261.6H511.5" fill="none" stroke="#555" stroke-width="0.6"/>
<text x="511" y="254.8" font-size="2.9" fill="#444">1. Update DB</text>
<text x="511" y="258.2" font-size="2.9" fill="#444">2. Set MAC back to zero</text>
<rect x="453.6" y="411.6" width="26.7" height="14.9" fill="#ffffff" fill-opacity="0.92"/>
<path d="M455.6 411.6H453.6V426.5H455.6" fill="none" stroke="#555" stroke-width="0.6"/>
<text x="455.1" y="416" font-size="3.2" fill="#444">Intended Config</text>
<text x="455.1" y="419.8" font-size="3.2" fill="#444">Entity Intended</text>
<text x="455.1" y="423.7" font-size="3.2" fill="#444">Config</text>
<rect x="586.4" y="402.1" width="53.1" height="21.5" fill="#ffffff" fill-opacity="0.92"/>
<path d="M588.4 402.1H586.4V423.6H588.4" fill="none" stroke="#555" stroke-width="0.6"/>
<text x="587.9" y="406.5" font-size="3.2" fill="#444">re use the same task (&#x27;Node</text>
<text x="587.9" y="410.4" font-size="3.2" fill="#444">cable</text>
<text x="587.9" y="414.2" font-size="3.2" fill="#444">count (SCOPE)&#x27; currently used</text>
<text x="587.9" y="418" font-size="3.2" fill="#444">in onboarding WF</text>
<rect x="645.8" y="405" width="26.7" height="14.9" fill="#ffffff" fill-opacity="0.92"/>
<path d="M647.8 405H645.8V419.9H647.8" fill="none" stroke="#555" stroke-width="0.6"/>
<text x="647.3" y="409.4" font-size="3.2" fill="#444">Use task being</text>
<text x="647.3" y="413.2" font-size="3.2" fill="#444">used in</text>
<text x="647.3" y="417.1" font-size="3.2" fill="#444">onboarding WF</text>
<rect x="733.5" y="427.9" width="30.7" height="17.2" fill="#ffffff" fill-opacity="0.92"/>
<path d="M735.5 427.9H733.5V445.1H735.5" fill="none" stroke="#555" stroke-width="0.6"/>
<text x="735" y="432.3" font-size="3.2" fill="#444">future need to</text>
<text x="735" y="436.2" font-size="3.2" fill="#444">explore way to</text>
<text x="735" y="440" font-size="3.2" fill="#444">do this in</text>
<text x="735" y="443.9" font-size="3.2" fill="#444">gradient fashion</text>
<rect x="696.8" y="456.6" width="87.2" height="18.6" fill="#ffffff" fill-opacity="0.92"/>
<path d="M698.8 456.6H696.8V475.3H698.8" fill="none" stroke="#555" stroke-width="0.6"/>
<text x="698.3" y="461" font-size="3.2" fill="#444">Wait for 10 mins</text>
<text x="698.3" y="464.9" font-size="3.2" fill="#444">- for now this will be placeholder timeout till</text>
<text x="698.3" y="468.7" font-size="3.2" fill="#444">(this is needs to be configurable). Check if all CMs</text>
<text x="698.3" y="472.5" font-size="3.2" fill="#444">came online</text>
<rect x="670.4" y="216.5" width="58.8" height="18.6" fill="#ffffff" fill-opacity="0.92"/>
<path d="M672.4 216.5H670.4V235.2H672.4" fill="none" stroke="#555" stroke-width="0.6"/>
<text x="671.9" y="220.9" font-size="3.2" fill="#444">Update DB for device entity (RPD)</text>
<text x="671.9" y="224.8" font-size="3.2" fill="#444">a. delete generated intended config</text>
<text x="671.9" y="228.6" font-size="3.2" fill="#444">- &#x27;activate device&#x27; intent</text>
<text x="671.9" y="232.4" font-size="3.2" fill="#444">b. Set MAC back to zero</text>
<rect x="950.2" y="248.1" width="72.3" height="14.6" fill="#ffffff" fill-opacity="0.92"/>
<path d="M952.2 248.1H950.2V262.7H952.2" fill="none" stroke="#555" stroke-width="0.6"/>
<text x="951.7" y="252.5" font-size="3.2" fill="#444">Update DB for device entity (RPD)</text>
<text x="951.7" y="256.3" font-size="3.2" fill="#444">a. delete generated intended config</text>
<text x="951.7" y="260.1" font-size="3.2" fill="#444">b. Set MAC back to zero</text>
<rect x="988.1" y="236.9" width="58.8" height="10.6" fill="#ffffff" fill-opacity="0.92"/>
<path d="M990.1 236.9H988.1V247.5H990.1" fill="none" stroke="#555" stroke-width="0.6"/>
<text x="989.6" y="241.3" font-size="3.2" fill="#444">Call SOT to get &#x27;create device&#x27; integr</text>
<text x="989.6" y="245.1" font-size="3.2" fill="#444">generated config</text>
<rect x="781.5" y="418.9" width="43" height="15.8" fill="#ffffff" fill-opacity="0.92"/>
<path d="M783.5 418.9H781.5V434.7H783.5" fill="none" stroke="#555" stroke-width="0.6"/>
<text x="783" y="423.3" font-size="3.2" fill="#444">Check if RPD is getting</text>
<text x="783" y="427.2" font-size="3.2" fill="#444">Activated and come online</text>
<text x="783" y="431" font-size="3.2" fill="#444">- this is placeholder</text>
<rect x="1049.2" y="440.4" width="55.1" height="11.5" fill="#ffffff" fill-opacity="0.92"/>
<path d="M1051.2 440.4H1049.2V451.9H1051.2" fill="none" stroke="#555" stroke-width="0.6"/>
<text x="1050.7" y="444.8" font-size="3.2" fill="#444">Threshold percentage should be</text>
<text x="1050.7" y="448.7" font-size="3.2" fill="#444">configurable</text>
<rect x="1084.2" y="320.6" width="58.9" height="14.3" fill="#ffffff" fill-opacity="0.92"/>
<path d="M1086.2 320.6H1084.2V335H1086.2" fill="none" stroke="#555" stroke-width="0.6"/>
<text x="1085.7" y="325" font-size="3.2" fill="#444">- Add (actual activation state) should</text>
<text x="1085.7" y="328.9" font-size="3.2" fill="#444">be updated in SOT</text>
<text x="1085.7" y="332.7" font-size="3.2" fill="#444">- Set RPD status to &#x27;Online&#x27;</text>
<rect x="1097.1" y="259" width="72.6" height="14.3" fill="#ffffff" fill-opacity="0.92"/>
<path d="M1099.1 259H1097.1V273.3H1099.1" fill="none" stroke="#555" stroke-width="0.6"/>
<text x="1098.6" y="263.4" font-size="3.2" fill="#444">Update DB for device entity (RPD) a. delete</text>
<text x="1098.6" y="267.2" font-size="3.2" fill="#444">generated intended config b. Set MAC back to</text>
<text x="1098.6" y="271" font-size="3.2" fill="#444">zero</text>
<rect x="1398.3" y="319.2" width="60" height="18.6" fill="#ffffff" fill-opacity="0.92"/>
<path d="M1400.3 319.2H1398.3V337.9H1400.3" fill="none" stroke="#555" stroke-width="0.6"/>
<text x="1399.8" y="323.6" font-size="3.2" fill="#444">1.Call openTrak API to get node IDs</text>
<text x="1399.8" y="327.4" font-size="3.2" fill="#444">2.Prepare names</text>
<text x="1399.8" y="331.3" font-size="3.2" fill="#444">3.Create payload</text>
<rect x="1454.6" y="349.3" width="48.2" height="11.5" fill="#ffffff" fill-opacity="0.92"/>
<path d="M1456.6 349.3H1454.6V360.8H1456.6" fill="none" stroke="#555" stroke-width="0.6"/>
<text x="1456.1" y="353.7" font-size="3.2" fill="#444">Configuring Node Names on</text>
<text x="1456.1" y="357.6" font-size="3.2" fill="#444">Port through API</text>
<rect x="1612.4" y="349.3" width="26.1" height="11.5" fill="#ffffff" fill-opacity="0.92"/>
<path d="M1614.4 349.3H1612.4V360.8H1614.4" fill="none" stroke="#555" stroke-width="0.6"/>
<text x="1613.9" y="353.7" font-size="3.2" fill="#444">Validate</text>
<text x="1613.9" y="357.6" font-size="3.2" fill="#444">configuration</text>
<text x="115" y="393.5" font-size="3.4" fill="#444" text-anchor="middle">Start</text>
<text x="242.3" y="372" font-size="3.4" fill="#444" text-anchor="middle">Is Retrieved RPD Entity</text>
<text x="242.3" y="375.4" font-size="3.4" fill="#444" text-anchor="middle">From SOT?</text>
<text x="240.3" y="397.8" font-size="3.4" fill="#444" text-anchor="middle">No</text>
<text x="345.6" y="319.5" font-size="3.4" fill="#444" text-anchor="middle">Is Network</text>
<text x="345.6" y="322.9" font-size="3.4" fill="#444" text-anchor="middle">status offline?</text>
<text x="361.7" y="308" font-size="3.4" fill="#444" text-anchor="middle">No</text>
<text x="368" y="396.4" font-size="3.4" fill="#444" text-anchor="middle">Is Swap RPD job?</text>
<text x="370" y="372" font-size="3.4" fill="#444" text-anchor="middle">Yes</text>
<text x="332.4" y="366.5" font-size="3.4" fill="#444" text-anchor="middle">Is Request</text>
<text x="332.4" y="369.9" font-size="3.4" fill="#444" text-anchor="middle">Validation</text>
<text x="332.4" y="373.3" font-size="3.4" fill="#444" text-anchor="middle">Success</text>
<text x="332.4" y="376.7" font-size="3.4" fill="#444" text-anchor="middle">(Failed?)</text>
<text x="348.5" y="382" font-size="3.4" fill="#444" text-anchor="middle">Yes</text>
<text x="383.8" y="382" font-size="3.4" fill="#444" text-anchor="middle">No</text>
<text x="390.4" y="318.1" font-size="3.4" fill="#444" text-anchor="middle">Yes</text>
<text x="333.6" y="399.8" font-size="3.4" fill="#444" text-anchor="middle">No</text>
<text x="334.4" y="513.4" font-size="3.4" fill="#444" text-anchor="middle">Stop</text>
<text x="478.8" y="397.8" font-size="3.4" fill="#444" text-anchor="middle">Is GenerateIntended</text>
<text x="478.8" y="401.2" font-size="3.4" fill="#444" text-anchor="middle">Config valid?</text>
<text x="486" y="382" font-size="3.4" fill="#444" text-anchor="middle">Yes</text>
<text x="554.3" y="365.4" font-size="3.4" fill="#444" text-anchor="middle">ACTIVATION_R</text>
<text x="554.3" y="368.8" font-size="3.4" fill="#444" text-anchor="middle">PD_PRE_CHEC</text>
<text x="554.3" y="372.2" font-size="3.4" fill="#444" text-anchor="middle">K_ENABLED</text>
<text x="578.6" y="382" font-size="3.4" fill="#444" text-anchor="middle">Yes</text>
<text x="650.9" y="396.4" font-size="3.4" fill="#444" text-anchor="middle">Is Precheck</text>
<text x="650.9" y="399.8" font-size="3.4" fill="#444" text-anchor="middle">Captured?</text>
<text x="665.8" y="382" font-size="3.4" fill="#444" text-anchor="middle">Yes</text>
<text x="737" y="396.4" font-size="3.4" fill="#444" text-anchor="middle">IsApplyIntended</text>
<text x="737" y="399.8" font-size="3.4" fill="#444" text-anchor="middle">Config to vCMTS</text>
<text x="737" y="403.2" font-size="3.4" fill="#444" text-anchor="middle">OK?</text>
<text x="757.9" y="382" font-size="3.4" fill="#444" text-anchor="middle">Yes</text>
<text x="478.8" y="372" font-size="3.4" fill="#444" text-anchor="middle">No</text>
<text x="500.3" y="304.3" font-size="3.4" fill="#444" text-anchor="middle">Is retry required?</text>
<text x="480.8" y="290.2" font-size="3.4" fill="#444" text-anchor="middle">Rollback</text>
<text x="458.2" y="302.3" font-size="3.4" fill="#444" text-anchor="middle">retry</text>
<text x="557.7" y="413" font-size="3.4" fill="#444" text-anchor="middle">No</text>
<text x="652.9" y="368.3" font-size="3.4" fill="#444" text-anchor="middle">No</text>
<text x="737.8" y="361.1" font-size="3.4" fill="#444" text-anchor="middle">No</text>
<text x="722.6" y="294.3" font-size="3.4" fill="#444" text-anchor="middle">Is retry required?</text>
<text x="739.9" y="281.3" font-size="3.4" fill="#444" text-anchor="middle">Rollback</text>
<text x="761.4" y="299.4" font-size="3.4" fill="#444" text-anchor="middle">retry</text>
<text x="823.7" y="366" font-size="3.4" fill="#444" text-anchor="middle">ACTIVATION_R</text>
<text x="823.7" y="369.4" font-size="3.4" fill="#444" text-anchor="middle">PD_ONLINE_CH</text>
<text x="823.7" y="372.8" font-size="3.4" fill="#444" text-anchor="middle">ECK_ENABLED</text>
<text x="838.9" y="382" font-size="3.4" fill="#444" text-anchor="middle">Yes</text>
<text x="946.5" y="382" font-size="3.4" fill="#444" text-anchor="middle">Yes</text>
<text x="972.9" y="366" font-size="3.4" fill="#444" text-anchor="middle">ACTIVATION_R</text>
<text x="972.9" y="369.4" font-size="3.4" fill="#444" text-anchor="middle">PD_POST_CHE</text>
<text x="972.9" y="372.8" font-size="3.4" fill="#444" text-anchor="middle">CK_ENABLED</text>
<text x="995.2" y="382" font-size="3.4" fill="#444" text-anchor="middle">Yes</text>
<text x="1061.8" y="396.7" font-size="3.4" fill="#444" text-anchor="middle">Is RPD</text>
<text x="1061.8" y="400.1" font-size="3.4" fill="#444" text-anchor="middle">Released?</text>
<text x="1087.9" y="382" font-size="3.4" fill="#444" text-anchor="middle">Yes</text>
<text x="925.5" y="372.3" font-size="3.4" fill="#444" text-anchor="middle">No</text>
<text x="945" y="304" font-size="3.4" fill="#444" text-anchor="middle">Is Retry required?</text>
<text x="890.5" y="302" font-size="3.4" fill="#444" text-anchor="middle">retry</text>
<text x="930.7" y="283.4" font-size="3.4" fill="#444" text-anchor="middle">rollback</text>
<text x="902" y="194.4" font-size="3.4" fill="#444" text-anchor="middle">IsApplyIntended</text>
<text x="902" y="197.8" font-size="3.4" fill="#444" text-anchor="middle">Config to vCMTS</text>
<text x="902" y="201.2" font-size="3.4" fill="#444" text-anchor="middle">OK?</text>
<text x="926.4" y="181.5" font-size="3.4" fill="#444" text-anchor="middle">Success</text>
<text x="945" y="192.1" font-size="3.4" fill="#444" text-anchor="middle">Failure</text>
<text x="896.3" y="423.8" font-size="3.4" fill="#444" text-anchor="middle">No</text>
<text x="1042.6" y="423.8" font-size="3.4" fill="#444" text-anchor="middle">No</text>
<text x="1072.7" y="373.4" font-size="3.4" fill="#444" text-anchor="middle">No</text>
<text x="1092.8" y="301.4" font-size="3.4" fill="#444" text-anchor="middle">Is RetryRequired?</text>
<text x="1044.9" y="299.4" font-size="3.4" fill="#444" text-anchor="middle">retry</text>
<text x="1075.5" y="281.1" font-size="3.4" fill="#444" text-anchor="middle">rollback</text>
<text x="1049.7" y="205.3" font-size="3.4" fill="#444" text-anchor="middle">IsApplyIntended</text>
<text x="1049.7" y="208.7" font-size="3.4" fill="#444" text-anchor="middle">Config to vCMTS</text>
<text x="1049.7" y="212.1" font-size="3.4" fill="#444" text-anchor="middle">OK?</text>
<text x="1072.7" y="193" font-size="3.4" fill="#444" text-anchor="middle">Success</text>
<text x="1092.8" y="203" font-size="3.4" fill="#444" text-anchor="middle">Failure</text>
<text x="1201.8" y="363.7" font-size="3.4" fill="#444" text-anchor="middle">Is Swap RPD job &amp;</text>
<text x="1201.8" y="367.1" font-size="3.4" fill="#444" text-anchor="middle">isOperationSuccess</text>
<text x="1201.8" y="370.5" font-size="3.4" fill="#444" text-anchor="middle">ful?</text>
<text x="1216.2" y="382" font-size="3.4" fill="#444" text-anchor="middle">No</text>
<text x="1377.7" y="395.2" font-size="3.4" fill="#444" text-anchor="middle">Sync trigger</text>
<text x="1377.7" y="398.6" font-size="3.4" fill="#444" text-anchor="middle">successful?</text>
<text x="1388.3" y="382" font-size="3.4" fill="#444" text-anchor="middle">Yes</text>
<text x="1414.1" y="370.8" font-size="3.4" fill="#444" text-anchor="middle">WAIT_TIME_XP</text>
<text x="1414.1" y="374.2" font-size="3.4" fill="#444" text-anchor="middle">ERTISE_CAT_</text>
<text x="1414.1" y="377.6" font-size="3.4" fill="#444" text-anchor="middle">RPD</text>
<text x="1378.8" y="373.4" font-size="3.4" fill="#444" text-anchor="middle">No</text>
<text x="1345.3" y="311.5" font-size="3.4" fill="#444" text-anchor="middle">Retry</text>
<text x="1202.7" y="403.3" font-size="3.4" fill="#444" text-anchor="middle">Yes</text>
<text x="1378.3" y="413.2" font-size="3.4" fill="#444" text-anchor="middle">XCMTS sync retry</text>
<text x="1378.3" y="416.6" font-size="3.4" fill="#444" text-anchor="middle">maxed out?</text>
<text x="1446.3" y="423.2" font-size="3.4" fill="#444" text-anchor="middle">Yes</text>
<text x="1351.6" y="423.8" font-size="3.4" fill="#444" text-anchor="middle">No</text>
<text x="1377.7" y="435.3" font-size="3.4" fill="#444" text-anchor="middle">Yes</text>
<text x="1321.7" y="484" font-size="3.4" fill="#444" text-anchor="middle">Retry</text>
<text x="1495.1" y="372.9" font-size="3.4" fill="#444" text-anchor="middle">Sync Complete?</text>
<text x="1506.6" y="382" font-size="3.4" fill="#444" text-anchor="middle">Yes</text>
<text x="1567.4" y="395.2" font-size="3.4" fill="#444" text-anchor="middle">Is API successful?</text>
<text x="1581.7" y="382" font-size="3.4" fill="#444" text-anchor="middle">Yes</text>
<text x="1599.5" y="392.9" font-size="3.4" fill="#444" text-anchor="middle">WAIT_TIME_XP</text>
<text x="1599.5" y="396.3" font-size="3.4" fill="#444" text-anchor="middle">ERTISE_POST_</text>
<text x="1599.5" y="399.7" font-size="3.4" fill="#444" text-anchor="middle">CONFIG</text>
<text x="1660.6" y="396.9" font-size="3.4" fill="#444" text-anchor="middle">Is configuration</text>
<text x="1660.6" y="400.3" font-size="3.4" fill="#444" text-anchor="middle">to vertis API</text>
<text x="1660.6" y="403.7" font-size="3.4" fill="#444" text-anchor="middle">successful?</text>
<text x="1671.2" y="382" font-size="3.4" fill="#444" text-anchor="middle">Yes</text>
<text x="1495.1" y="398.8" font-size="3.4" fill="#444" text-anchor="middle">No</text>
<text x="1469.8" y="413.8" font-size="3.4" fill="#444" text-anchor="middle">Get nodes retry</text>
<text x="1469.8" y="417.2" font-size="3.4" fill="#444" text-anchor="middle">maxed out?</text>
<text x="1425.4" y="406" font-size="3.4" fill="#444" text-anchor="middle">No</text>
<text x="1557.3" y="261.3" font-size="3.4" fill="#444" text-anchor="middle">Retry</text>
<text x="1569.7" y="371.4" font-size="3.4" fill="#444" text-anchor="middle">No</text>
<text x="1662" y="373.4" font-size="3.4" fill="#444" text-anchor="middle">No</text></g></svg>
<div class="zb" style="left:1635px"></div>
<div class="zb" style="left:1679px"></div>
<div style="position:absolute;left:1655px;top:230px;width:40px;height:40px;border-radius:20px;background:#fff;box-shadow:0 1px 3px rgba(0,0,0,0.12)"></div>
<div style="position:absolute;left:1663px;top:238px;width:24px;height:24px;border-radius:12px;background:#0bbf52"></div>
<svg class="icon" style="left:0;top:0" width="1751" height="300">
 <circle cx="1650.6" cy="195.4" r="6.3" fill="#000"/>
 <path d="M1654.6 199.4L1660 204.8M1698.6 199.4L1704 204.8" stroke="#000" stroke-width="2.2" stroke-linecap="round"/>
 <path d="M1647.3 195.4H1653.9M1650.6 192.1V198.7" stroke="#fff" stroke-width="1.5"/>
 <circle cx="1694.6" cy="195.4" r="6.3" fill="#000"/>
 <path d="M1691.3 195.4H1697.9" stroke="#fff" stroke-width="1.5"/>
 <path d="M1683 249.8H1669.5M1675 244.2L1669.4 249.8L1675 255.4" fill="none" stroke="#fff" stroke-width="2.4" stroke-linecap="round" stroke-linejoin="round"/>
</svg>

</body></html>
